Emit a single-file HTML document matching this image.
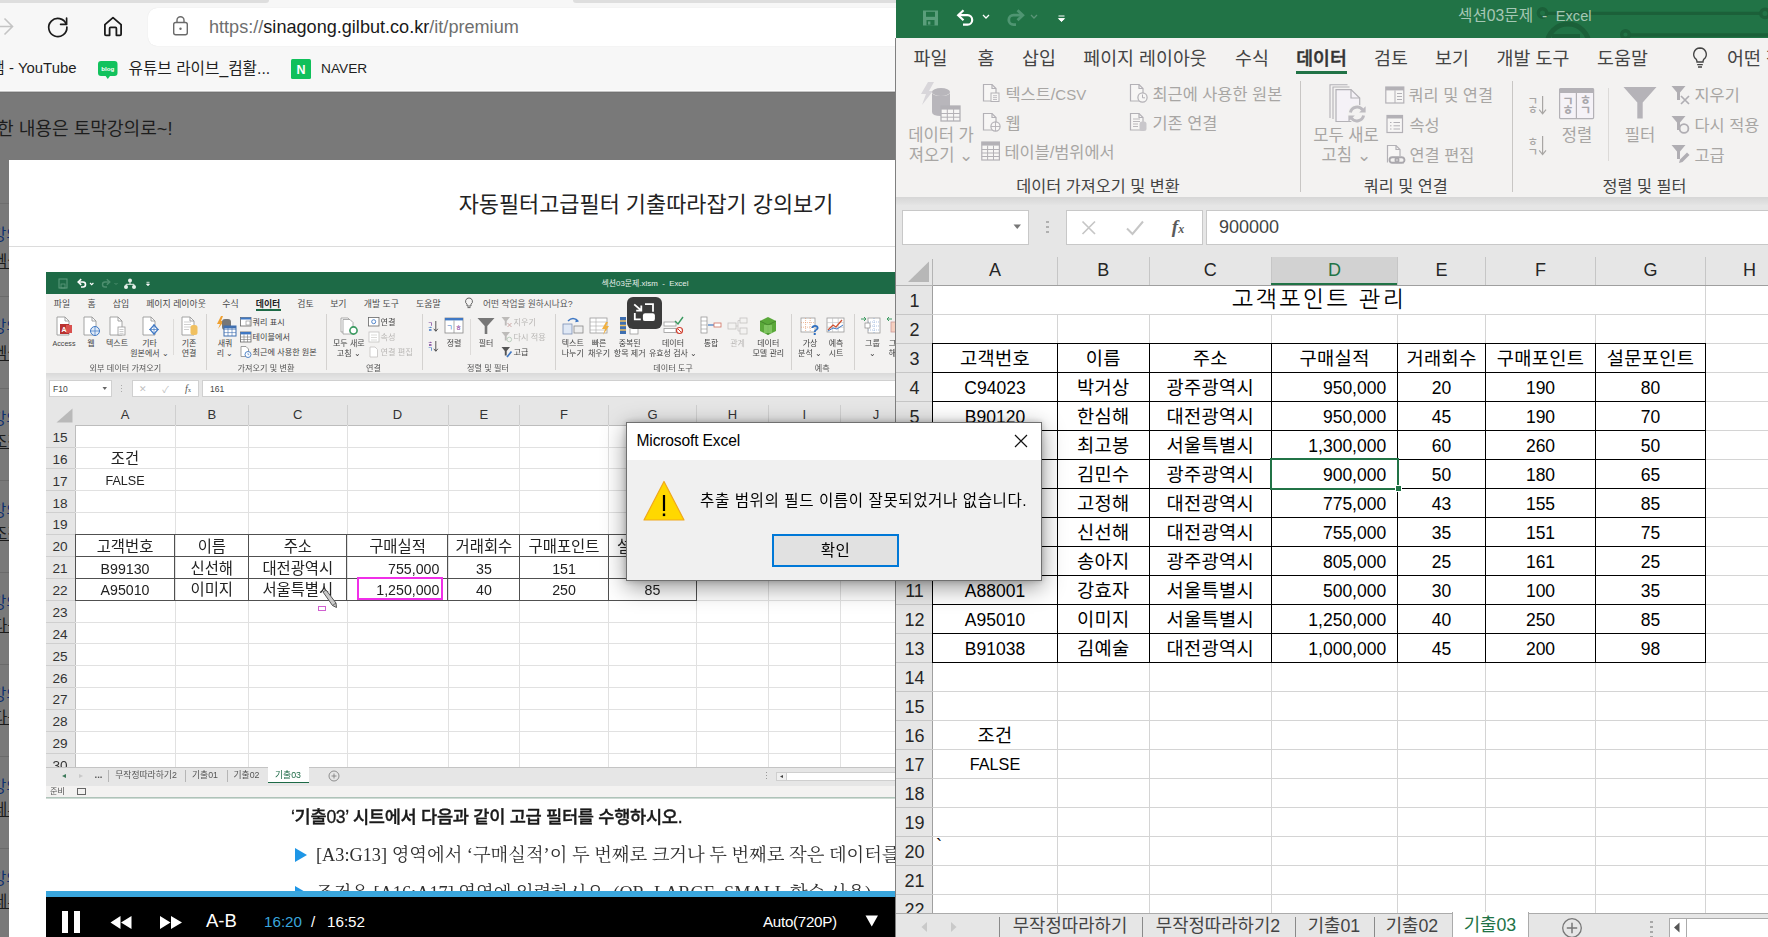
<!DOCTYPE html>
<html lang="ko"><head><meta charset="utf-8"><title>섹션03문제 - Excel</title>
<style>
html,body{margin:0;padding:0;}
body{width:1768px;height:937px;overflow:hidden;position:relative;background:#fff;font-family:'Liberation Sans','Noto Sans CJK KR',sans-serif;}
div{box-sizing:border-box;}
#browser{position:absolute;left:0;top:0;width:896px;height:937px;overflow:hidden;background:#fff;}
#excel{position:absolute;left:896px;top:0;width:872px;height:937px;overflow:hidden;background:#fff;}
#video{position:absolute;left:46px;top:272px;width:860px;height:665px;overflow:hidden;background:#fff;}
#vin{position:absolute;left:-46px;top:-272px;width:960px;height:937px;filter:blur(0.45px);}
.serif{font-family:'Liberation Serif','Noto Serif CJK KR','Noto Serif CJK SC',serif;}
svg{position:absolute;overflow:visible;}
</style></head><body>

<div id="browser">
<div style="position:absolute;left:0.0px;top:0.0px;width:896.0px;height:3.0px;background:#f7f7f7;"></div>
<div style="position:absolute;left:0.0px;top:0.0px;width:269.0px;height:2.5px;background:#dedede;border-radius:0 0 7px 0;"></div>
<div style="position:absolute;left:573.0px;top:0.0px;width:323.0px;height:2.5px;background:#dedede;border-radius:0 0 0 7px;"></div>
<div style="position:absolute;left:0.0px;top:3.0px;width:896.0px;height:89.0px;background:#f7f7f7;"></div>
<div style="position:absolute;left:0.0px;top:90.0px;width:896.0px;height:1.0px;background:#fcfcfc;"></div>
<div style="position:absolute;left:0.0px;top:91.0px;width:896.0px;height:1.0px;background:#c4c4c4;"></div>
<div style="position:absolute;left:148.0px;top:8.0px;width:760.0px;height:37.5px;background:#fff;border-radius:9px;box-shadow:0 0 1px rgba(0,0,0,.12);"></div>
<svg style="left:-6px;top:16px" width="22" height="22" viewBox="0 0 22 22"><path d="M0 10.5H18M10.5 2.5L18.5 10.5L10.5 18.5" fill="none" stroke="#c4c4c4" stroke-width="1.6"/></svg>
<svg style="left:46px;top:15px" width="24" height="24" viewBox="0 0 24 24"><path d="M20.3 9.2A9.1 9.1 0 1 0 20.9 12" fill="none" stroke="#1b1b1b" stroke-width="1.7" stroke-linecap="round"/><path d="M20.6 3.2V9.3H14.6" fill="none" stroke="#1b1b1b" stroke-width="1.7" stroke-linecap="round" stroke-linejoin="round"/></svg>
<svg style="left:101px;top:15px" width="24" height="24" viewBox="0 0 24 24"><path d="M12 2.6L3.9 9.6V19.2Q3.9 20.3 5 20.3H8.6V13.4Q8.6 12.4 9.6 12.4H14.4Q15.4 12.4 15.4 13.4V20.3H19Q20.1 20.3 20.1 19.2V9.6Z" fill="none" stroke="#1b1b1b" stroke-width="1.8" stroke-linejoin="round"/></svg>
<svg style="left:171px;top:15px" width="20" height="22" viewBox="0 0 20 22"><rect x="2.7" y="7.5" width="13.6" height="12.3" rx="2" fill="none" stroke="#6a6a6a" stroke-width="1.4"/><path d="M6 7.5V5.2A3.5 3.5 0 0 1 13 5.2V7.5" fill="none" stroke="#6a6a6a" stroke-width="1.4"/><circle cx="9.5" cy="13.7" r="1.2" fill="#6a6a6a"/></svg>
<div style="position:absolute;left:209.0px;top:14.5px;font-size:18.1px;line-height:25px;color:#1a1a1a;white-space:nowrap;"><span style="color:#6e6e6e">https://</span><span style="color:#1a1a1a">sinagong.gilbut.co.kr</span><span style="color:#6e6e6e">/it/premium</span></div>
<div style="position:absolute;left:76.5px;top:58.0px;font-size:14.9px;line-height:21px;color:#1f1f1f;white-space:nowrap;transform:translateX(-100%);">캠 - YouTube</div>
<svg style="left:97px;top:60px" width="22" height="20" viewBox="0 0 22 20"><path d="M4 1H17.5Q20.5 1 20.5 4V13Q20.5 16 17.5 16H13L10.8 19L8.6 16H4Q1 16 1 13V4Q1 1 4 1Z" fill="#12c25d"/><text x="10.8" y="11" font-size="6.2" font-weight="700" fill="#fff" text-anchor="middle" font-family="Liberation Sans,sans-serif">blog</text></svg>
<div style="position:absolute;left:128.5px;top:57.5px;font-size:15.7px;line-height:22px;color:#1f1f1f;white-space:nowrap;">유튜브 라이브_컴활...</div>
<svg style="left:291px;top:59px" width="20" height="20" viewBox="0 0 20 20"><rect width="20" height="20" rx="1.5" fill="#10c05b"/><text x="10" y="14.6" font-size="12.5" font-weight="700" fill="#fff" text-anchor="middle" font-family="Liberation Sans,sans-serif">N</text></svg>
<div style="position:absolute;left:321.0px;top:59.0px;font-size:13.7px;line-height:19px;color:#1f1f1f;white-space:nowrap;">NAVER</div>
<div style="position:absolute;left:0.0px;top:92.0px;width:896.0px;height:845.0px;background:#797979;"></div>
<div style="position:absolute;left:0.0px;top:92.0px;width:896.0px;height:1.0px;background:#727272;"></div>
<div style="position:absolute;left:-3.0px;top:117.0px;font-size:18.1px;line-height:25px;color:#1d1d1d;white-space:nowrap;">한 내용은 토막강의로~!</div>
<div style="position:absolute;left:0.0px;top:203.0px;width:9.0px;height:1.0px;background:#6e6e6e;"></div>
<div style="position:absolute;left:0.0px;top:296.0px;width:9.0px;height:1.0px;background:#6a6a6a;"></div>
<div style="position:absolute;left:0.0px;top:388.0px;width:9.0px;height:1.0px;background:#6a6a6a;"></div>
<div style="position:absolute;left:0.0px;top:480.0px;width:9.0px;height:1.0px;background:#6a6a6a;"></div>
<div style="position:absolute;left:0.0px;top:572.0px;width:9.0px;height:1.0px;background:#6a6a6a;"></div>
<div style="position:absolute;left:0.0px;top:664.0px;width:9.0px;height:1.0px;background:#6a6a6a;"></div>
<div style="position:absolute;left:0.0px;top:756.0px;width:9.0px;height:1.0px;background:#6a6a6a;"></div>
<div style="position:absolute;left:0.0px;top:848.0px;width:9.0px;height:1.0px;background:#6a6a6a;"></div>
<div style="position:absolute;left:-8.0px;top:224.0px;font-size:15.5px;line-height:22px;color:#0d2f6e;white-space:nowrap;">강의</div>
<div style="position:absolute;left:-7.0px;top:251.0px;font-size:15.5px;line-height:22px;color:#1a1a1a;white-space:nowrap;text-decoration:underline;">엑셀</div>
<div style="position:absolute;left:-8.0px;top:316.0px;font-size:15.5px;line-height:22px;color:#0d2f6e;white-space:nowrap;">강의</div>
<div style="position:absolute;left:-7.0px;top:343.0px;font-size:15.5px;line-height:22px;color:#1a1a1a;white-space:nowrap;text-decoration:underline;">엑셀</div>
<div style="position:absolute;left:-8.0px;top:408.0px;font-size:15.5px;line-height:22px;color:#0d2f6e;white-space:nowrap;">강의</div>
<div style="position:absolute;left:-7.0px;top:431.0px;font-size:15.5px;line-height:22px;color:#1a1a1a;white-space:nowrap;text-decoration:underline;">조건</div>
<div style="position:absolute;left:-8.0px;top:500.0px;font-size:15.5px;line-height:22px;color:#0d2f6e;white-space:nowrap;">강의</div>
<div style="position:absolute;left:-7.0px;top:523.0px;font-size:15.5px;line-height:22px;color:#1a1a1a;white-space:nowrap;text-decoration:underline;">조건</div>
<div style="position:absolute;left:-8.0px;top:592.0px;font-size:15.5px;line-height:22px;color:#0d2f6e;white-space:nowrap;">강의</div>
<div style="position:absolute;left:-7.0px;top:615.0px;font-size:15.5px;line-height:22px;color:#1a1a1a;white-space:nowrap;text-decoration:underline;">다음</div>
<div style="position:absolute;left:-8.0px;top:684.0px;font-size:15.5px;line-height:22px;color:#0d2f6e;white-space:nowrap;">강의</div>
<div style="position:absolute;left:-7.0px;top:707.0px;font-size:15.5px;line-height:22px;color:#1a1a1a;white-space:nowrap;text-decoration:underline;">다음</div>
<div style="position:absolute;left:-8.0px;top:776.0px;font-size:15.5px;line-height:22px;color:#0d2f6e;white-space:nowrap;">강의</div>
<div style="position:absolute;left:-7.0px;top:799.0px;font-size:15.5px;line-height:22px;color:#1a1a1a;white-space:nowrap;text-decoration:underline;">세부</div>
<div style="position:absolute;left:-8.0px;top:868.0px;font-size:15.5px;line-height:22px;color:#0d2f6e;white-space:nowrap;">강의</div>
<div style="position:absolute;left:-7.0px;top:891.0px;font-size:15.5px;line-height:22px;color:#1a1a1a;white-space:nowrap;text-decoration:underline;">세부</div>
<div style="position:absolute;left:9.0px;top:160.0px;width:890.0px;height:780.0px;background:#fff;"></div>
<div style="position:absolute;left:646.0px;top:189.0px;font-size:21.9px;line-height:31px;color:#222;white-space:nowrap;transform:translateX(-50%);">자동필터고급필터 기출따라잡기 강의보기</div>
<div style="position:absolute;left:9.0px;top:246.0px;width:890.0px;height:1.0px;background:#dcdcdc;"></div>
<div id="video"><div id="vin">
<div style="position:absolute;left:46.0px;top:272.0px;width:860.0px;height:22.0px;background:#1d6a46;"></div>
<svg style="left:58px;top:278px" width="100" height="12" viewBox="0 0 100 12"><rect x="1" y="1" width="8" height="9" fill="none" stroke="#5f9b7e" stroke-width="1"/><rect x="3" y="6" width="4" height="4" fill="none" stroke="#5f9b7e" stroke-width="0.8"/><path d="M21 4H25A2.5 2.5 0 0 1 25 9H23" fill="none" stroke="#fff" stroke-width="1.6"/><path d="M23.2 1.2L20.2 4L23.2 6.8" fill="none" stroke="#fff" stroke-width="1.6"/><path d="M32 5L33.7 6.7L35.4 5" fill="none" stroke="#fff" stroke-width="1.1"/><path d="M51 4H47A2.5 2.5 0 0 0 47 9H49" fill="none" stroke="#4d8f6f" stroke-width="1.4"/><path d="M48.8 1.2L51.8 4L48.8 6.8" fill="none" stroke="#4d8f6f" stroke-width="1.4"/><path d="M56.5 5L58 6.5L59.5 5" fill="none" stroke="#4d8f6f" stroke-width="1"/><circle cx="72" cy="2.6" r="2" fill="#e8f1ec"/><circle cx="68" cy="9" r="2" fill="#e8f1ec"/><circle cx="76" cy="9" r="2" fill="#e8f1ec"/><path d="M72 4V6.3M68 8V6.3H76V8" stroke="#e8f1ec" fill="none" stroke-width="1"/><path d="M88.5 4.3H91.5M88.5 6L90 7.8L91.5 6Z" stroke="#fff" fill="#fff" stroke-width="0.8"/></svg>
<div style="position:absolute;left:645.0px;top:277.5px;font-size:7.9px;line-height:11px;color:#e6efe9;white-space:nowrap;transform:translateX(-50%);">섹션03문제.xlsm&nbsp; - &nbsp;Excel</div>
<div style="position:absolute;left:46.0px;top:294.0px;width:860.0px;height:79.0px;background:#f3f2f1;"></div>
<div style="position:absolute;left:62.0px;top:297.8px;font-size:8.9px;line-height:12px;color:#4a4a4a;white-space:nowrap;transform:translateX(-50%);">파일</div>
<div style="position:absolute;left:91.5px;top:297.8px;font-size:8.9px;line-height:12px;color:#4a4a4a;white-space:nowrap;transform:translateX(-50%);">홈</div>
<div style="position:absolute;left:121.0px;top:297.8px;font-size:8.9px;line-height:12px;color:#4a4a4a;white-space:nowrap;transform:translateX(-50%);">삽입</div>
<div style="position:absolute;left:176.0px;top:297.8px;font-size:8.9px;line-height:12px;color:#4a4a4a;white-space:nowrap;transform:translateX(-50%);">페이지 레이아웃</div>
<div style="position:absolute;left:230.5px;top:297.8px;font-size:8.9px;line-height:12px;color:#4a4a4a;white-space:nowrap;transform:translateX(-50%);">수식</div>
<div style="position:absolute;left:305.5px;top:297.8px;font-size:8.9px;line-height:12px;color:#4a4a4a;white-space:nowrap;transform:translateX(-50%);">검토</div>
<div style="position:absolute;left:338.3px;top:297.8px;font-size:8.9px;line-height:12px;color:#4a4a4a;white-space:nowrap;transform:translateX(-50%);">보기</div>
<div style="position:absolute;left:381.4px;top:297.8px;font-size:8.9px;line-height:12px;color:#4a4a4a;white-space:nowrap;transform:translateX(-50%);">개발 도구</div>
<div style="position:absolute;left:428.3px;top:297.8px;font-size:8.9px;line-height:12px;color:#4a4a4a;white-space:nowrap;transform:translateX(-50%);">도움말</div>
<div style="position:absolute;left:268.0px;top:297.8px;font-size:8.9px;line-height:12px;color:#1f1f1f;white-space:nowrap;transform:translateX(-50%);font-weight:700;">데이터</div>
<div style="position:absolute;left:255.5px;top:309.3px;width:25.5px;height:1.8px;background:#1d6a46;"></div>
<svg style="left:464px;top:297px" width="10" height="13" viewBox="0 0 10 13"><path d="M5 1A3.4 3.4 0 0 0 3 7.2V9H7V7.2A3.4 3.4 0 0 0 5 1ZM3.5 10.6H6.5" fill="none" stroke="#555" stroke-width="0.9"/></svg>
<div style="position:absolute;left:483.0px;top:297.5px;font-size:8.7px;line-height:12px;color:#555;white-space:nowrap;">어떤 작업을 원하시나요?</div>
<svg style="left:52.0px;top:316px" width="24" height="22" viewBox="0 0 24 22"><path d="M5 1H13L17 5V19H5Z" fill="#fff" stroke="#9a9a9a" stroke-width="0.9"/><path d="M13 1V5H17" fill="none" stroke="#9a9a9a" stroke-width="0.9"/><rect x="8" y="8" width="9" height="10" fill="#b8312f"/><rect x="14" y="9" width="6" height="8" fill="#d9504e"/><text x="12" y="16" font-size="7" font-weight="700" fill="#fff" text-anchor="middle" font-family="Liberation Sans,sans-serif">A</text></svg><div style="position:absolute;left:64.0px;top:337.5px;font-size:8.0px;line-height:11px;color:#444;white-space:nowrap;transform:translateX(-50%);"><span style="font-size:7.1px">Access</span></div>
<svg style="left:79.0px;top:316px" width="24" height="22" viewBox="0 0 24 22"><path d="M5 1H13L17 5V19H5Z" fill="#fff" stroke="#9a9a9a" stroke-width="0.9"/><path d="M13 1V5H17" fill="none" stroke="#9a9a9a" stroke-width="0.9"/><circle cx="16" cy="15" r="4.5" fill="#dfeaf7" stroke="#3f78c4" stroke-width="1"/><path d="M11.5 15H20.5M16 10.5V19.5" stroke="#3f78c4" stroke-width="0.7"/></svg><div style="position:absolute;left:91.0px;top:337.5px;font-size:8.0px;line-height:11px;color:#444;white-space:nowrap;transform:translateX(-50%);">웹</div>
<svg style="left:105.0px;top:316px" width="24" height="22" viewBox="0 0 24 22"><path d="M5 1H13L17 5V19H5Z" fill="#fff" stroke="#9a9a9a" stroke-width="0.9"/><path d="M13 1V5H17" fill="none" stroke="#9a9a9a" stroke-width="0.9"/><rect x="13" y="11" width="7" height="8" fill="#fff" stroke="#9a9a9a" stroke-width="0.8"/><path d="M14.5 13.5H18.5M14.5 15.5H18.5M14.5 17.3H18.5" stroke="#aaa" stroke-width="0.6"/></svg><div style="position:absolute;left:117.0px;top:337.5px;font-size:8.0px;line-height:11px;color:#444;white-space:nowrap;transform:translateX(-50%);">텍스트</div>
<svg style="left:137.5px;top:316px" width="24" height="22" viewBox="0 0 24 22"><path d="M5 1H13L17 5V19H5Z" fill="#fff" stroke="#9a9a9a" stroke-width="0.9"/><path d="M13 1V5H17" fill="none" stroke="#9a9a9a" stroke-width="0.9"/><path d="M16 9L20 13.5L16 18L12 13.5Z" fill="#fff" stroke="#3f78c4" stroke-width="1.2"/><path d="M16 8V19M11 13.5H21" stroke="#3f78c4" stroke-width="0.7"/></svg><div style="position:absolute;left:149.5px;top:337.5px;font-size:8.0px;line-height:11px;color:#444;white-space:nowrap;transform:translateX(-50%);">기타</div><div style="position:absolute;left:149.5px;top:348.0px;font-size:8.0px;line-height:11px;color:#444;white-space:nowrap;transform:translateX(-50%);">원본에서 ⌄</div>
<div style="position:absolute;left:172.6px;top:319.0px;width:0.8px;height:36.0px;background:#dddbd9;"></div>
<svg style="left:177.0px;top:316px" width="24" height="22" viewBox="0 0 24 22"><path d="M5 1H13L17 5V19H5Z" fill="#fff" stroke="#9a9a9a" stroke-width="0.9"/><path d="M13 1V5H17" fill="none" stroke="#9a9a9a" stroke-width="0.9"/><path d="M7 6H14M7 8.5H14M7 11H14M7 13.5H12" stroke="#bbb" stroke-width="0.7"/><rect x="13.5" y="9" width="7" height="10" rx="2.5" fill="#f0c060"/></svg><div style="position:absolute;left:189.0px;top:337.5px;font-size:8.0px;line-height:11px;color:#444;white-space:nowrap;transform:translateX(-50%);">기존</div><div style="position:absolute;left:189.0px;top:348.0px;font-size:8.0px;line-height:11px;color:#444;white-space:nowrap;transform:translateX(-50%);">연결</div>
<div style="position:absolute;left:206.0px;top:314.0px;width:1.0px;height:56.0px;background:#d4d2d0;"></div>
<svg style="left:213.0px;top:316px" width="24" height="22" viewBox="0 0 24 22"><path d="M8 0L4 8H7L5 13L11 5H8L10 0Z" fill="#f0a030"/><rect x="9" y="3" width="9" height="11" rx="3" fill="#777"/><rect x="11" y="10" width="12" height="10" fill="#fff" stroke="#3f6fb0" stroke-width="1"/><path d="M11 13.3H23M11 16.6H23M15 10V20M19 10V20" stroke="#3f6fb0" stroke-width="0.6"/><rect x="11" y="10" width="12" height="2.4" fill="#3f6fb0"/></svg><div style="position:absolute;left:225.0px;top:337.5px;font-size:8.0px;line-height:11px;color:#444;white-space:nowrap;transform:translateX(-50%);">새쿼</div><div style="position:absolute;left:225.0px;top:348.0px;font-size:8.0px;line-height:11px;color:#444;white-space:nowrap;transform:translateX(-50%);">리 ⌄</div>
<svg style="left:240.0px;top:316.0px" width="12" height="12" viewBox="0 0 12 12"><rect x="0.5" y="1.5" width="10.5" height="8.5" fill="#fff" stroke="#666" stroke-width="0.8"/><rect x="0.5" y="1.5" width="10.5" height="2" fill="#3f78c4"/><rect x="6" y="5" width="4" height="4" fill="none" stroke="#888" stroke-width="0.6"/></svg><div style="position:absolute;left:252.5px;top:316.8px;font-size:8.15px;line-height:11px;color:#444;white-space:nowrap;">쿼리 표시</div>
<svg style="left:240.0px;top:331.0px" width="12" height="12" viewBox="0 0 12 12"><rect x="0.5" y="1" width="10.5" height="10" fill="#fff" stroke="#666" stroke-width="0.8"/><rect x="0.5" y="1" width="10.5" height="2.4" fill="#3f78c4"/><path d="M0.5 6H11M0.5 8.5H11M4 3.4V11M7.5 3.4V11" stroke="#777" stroke-width="0.6"/></svg><div style="position:absolute;left:252.5px;top:331.8px;font-size:8.15px;line-height:11px;color:#444;white-space:nowrap;">테이블에서</div>
<svg style="left:240.0px;top:346.0px" width="12" height="12" viewBox="0 0 12 12"><path d="M1 0.5H6L8.5 3V10.5H1Z" fill="#fff" stroke="#888" stroke-width="0.8"/><circle cx="8" cy="8.5" r="3" fill="#fff" stroke="#3f78c4" stroke-width="0.9"/><path d="M8 7V8.7H9.3" stroke="#3f78c4" stroke-width="0.6" fill="none"/></svg><div style="position:absolute;left:252.5px;top:346.8px;font-size:8.15px;line-height:11px;color:#444;white-space:nowrap;">최근에 사용한 원본</div>
<div style="position:absolute;left:125.4px;top:363.2px;font-size:8.15px;line-height:11px;color:#555;white-space:nowrap;transform:translateX(-50%);">외부 데이터 가져오기</div>
<div style="position:absolute;left:266.0px;top:363.2px;font-size:8.15px;line-height:11px;color:#555;white-space:nowrap;transform:translateX(-50%);">가져오기 및 변환</div>
<div style="position:absolute;left:326.0px;top:314.0px;width:1.0px;height:56.0px;background:#d4d2d0;"></div>
<svg style="left:336.8px;top:316px" width="24" height="22" viewBox="0 0 24 22"><path d="M4 2H11L14 5V16H4Z" fill="#fff" stroke="#999" stroke-width="0.8"/><path d="M6 3.5H13L16 6.5V18H6Z" fill="#fff" stroke="#999" stroke-width="0.8"/><circle cx="16.5" cy="14.5" r="3.6" fill="#fff" stroke="#3a9a60" stroke-width="1.6"/></svg><div style="position:absolute;left:348.8px;top:337.5px;font-size:8.0px;line-height:11px;color:#444;white-space:nowrap;transform:translateX(-50%);">모두 새로</div><div style="position:absolute;left:348.8px;top:348.0px;font-size:8.0px;line-height:11px;color:#444;white-space:nowrap;transform:translateX(-50%);">고침 ⌄</div>
<svg style="left:368.0px;top:316.0px" width="12" height="12" viewBox="0 0 12 12"><rect x="0.5" y="1.5" width="10.5" height="8.5" fill="#fff" stroke="#666" stroke-width="0.8"/><circle cx="5.7" cy="5.7" r="2" fill="none" stroke="#3f78c4" stroke-width="0.9"/></svg><div style="position:absolute;left:380.5px;top:316.8px;font-size:8.15px;line-height:11px;color:#444;white-space:nowrap;">연결</div>
<svg style="left:368.0px;top:331.0px" width="12" height="12" viewBox="0 0 12 12"><rect x="1" y="1" width="10" height="10" fill="#fff" stroke="#c4c2c0" stroke-width="0.8"/><path d="M3 4H9M3 6.5H9M3 9H9" stroke="#c4c2c0" stroke-width="0.6"/></svg><div style="position:absolute;left:380.5px;top:331.8px;font-size:8.15px;line-height:11px;color:#b8b6b4;white-space:nowrap;">속성</div>
<svg style="left:368.0px;top:346.0px" width="12" height="12" viewBox="0 0 12 12"><path d="M2 1H7L9.5 3.5V11H2Z" fill="#fff" stroke="#c4c2c0" stroke-width="0.8"/></svg><div style="position:absolute;left:380.5px;top:346.8px;font-size:8.15px;line-height:11px;color:#b8b6b4;white-space:nowrap;">연결 편집</div>
<div style="position:absolute;left:373.5px;top:363.2px;font-size:8.15px;line-height:11px;color:#555;white-space:nowrap;transform:translateX(-50%);">연결</div>
<div style="position:absolute;left:421.5px;top:314.0px;width:1.0px;height:56.0px;background:#d4d2d0;"></div>
<svg style="left:427px;top:320px" width="12" height="13" viewBox="0 0 12 13"><text x="3.3" y="5.5" font-size="5.5" fill="#7a3f9a" text-anchor="middle" font-weight="700">ㄱ</text><text x="3.3" y="11" font-size="5.5" fill="#3f78c4" text-anchor="middle" font-weight="700">ㅎ</text><path d="M8.8 1V11M6.8 8.8L8.8 11.3L10.8 8.8" fill="none" stroke="#444" stroke-width="0.9"/></svg>
<svg style="left:427px;top:340px" width="12" height="13" viewBox="0 0 12 13"><text x="3.3" y="5.5" font-size="5.5" fill="#7a3f9a" text-anchor="middle" font-weight="700">ㅎ</text><text x="3.3" y="11" font-size="5.5" fill="#3f78c4" text-anchor="middle" font-weight="700">ㄱ</text><path d="M8.8 1V11M6.8 8.8L8.8 11.3L10.8 8.8" fill="none" stroke="#444" stroke-width="0.9"/></svg>
<svg style="left:442.0px;top:316px" width="24" height="22" viewBox="0 0 24 22"><rect x="3" y="2" width="18" height="15" fill="#fff" stroke="#888" stroke-width="0.8"/><rect x="3" y="2" width="18" height="2.4" fill="#3f78c4"/><path d="M12 4.4V17" stroke="#888" stroke-width="0.7"/><text x="7.5" y="14" font-size="7" fill="#3f78c4" text-anchor="middle">ㄱ</text><text x="16.5" y="14" font-size="7" fill="#8a3fa0" text-anchor="middle">ㅎ</text></svg><div style="position:absolute;left:454.0px;top:337.5px;font-size:8.0px;line-height:11px;color:#444;white-space:nowrap;transform:translateX(-50%);">정렬</div>
<div style="position:absolute;left:470.0px;top:319.0px;width:0.8px;height:36.0px;background:#dddbd9;"></div>
<svg style="left:474.0px;top:316px" width="24" height="22" viewBox="0 0 24 22"><path d="M3.5 2H20.5L13.3 10V18H10.7V10Z" fill="#777"/></svg><div style="position:absolute;left:486.0px;top:337.5px;font-size:8.0px;line-height:11px;color:#444;white-space:nowrap;transform:translateX(-50%);">필터</div>
<svg style="left:501.0px;top:316.0px" width="12" height="12" viewBox="0 0 12 12"><path d="M0.5 1H9L5.7 5V9.5H3.8V5Z" fill="#bdbbb9"/><path d="M6.5 7L10.5 11M10.5 7L6.5 11" stroke="#c8a0a0" stroke-width="0.9"/></svg><div style="position:absolute;left:513.5px;top:316.8px;font-size:8.15px;line-height:11px;color:#b8b6b4;white-space:nowrap;">지우기</div>
<svg style="left:501.0px;top:331.0px" width="12" height="12" viewBox="0 0 12 12"><path d="M0.5 1H9L5.7 5V9.5H3.8V5Z" fill="#bdbbb9"/><circle cx="8.3" cy="8.5" r="2.3" fill="none" stroke="#b5c9b8" stroke-width="0.9"/></svg><div style="position:absolute;left:513.5px;top:331.8px;font-size:8.15px;line-height:11px;color:#b8b6b4;white-space:nowrap;">다시 적용</div>
<svg style="left:501.0px;top:346.0px" width="12" height="12" viewBox="0 0 12 12"><path d="M0.5 1H9L5.7 5V9.5H3.8V5Z" fill="#555"/><path d="M6 11L10.5 5.5" stroke="#3f78c4" stroke-width="1.7"/></svg><div style="position:absolute;left:513.5px;top:346.8px;font-size:8.15px;line-height:11px;color:#444;white-space:nowrap;">고급</div>
<div style="position:absolute;left:488.0px;top:363.2px;font-size:8.15px;line-height:11px;color:#555;white-space:nowrap;transform:translateX(-50%);">정렬 및 필터</div>
<div style="position:absolute;left:554.5px;top:314.0px;width:1.0px;height:56.0px;background:#d4d2d0;"></div>
<svg style="left:560.8px;top:316px" width="24" height="22" viewBox="0 0 24 22"><rect x="2" y="8" width="9" height="10" fill="#dfe8f5" stroke="#7a8fb3" stroke-width="0.8"/><rect x="13" y="10" width="9" height="7" fill="#eee" stroke="#888" stroke-width="0.8"/><path d="M7 5Q12 0 17 5" fill="none" stroke="#3f78c4" stroke-width="1.5"/><path d="M15 2.5L18 5.5L14.3 6.3Z" fill="#3f78c4"/></svg><div style="position:absolute;left:572.8px;top:337.5px;font-size:8.0px;line-height:11px;color:#444;white-space:nowrap;transform:translateX(-50%);">텍스트</div><div style="position:absolute;left:572.8px;top:348.0px;font-size:8.0px;line-height:11px;color:#444;white-space:nowrap;transform:translateX(-50%);">나누기</div>
<svg style="left:587.0px;top:316px" width="24" height="22" viewBox="0 0 24 22"><rect x="3" y="2" width="17" height="15" fill="#fff" stroke="#999" stroke-width="0.8"/><path d="M3 6H20M3 10H20M3 14H20M9 2V17" stroke="#aaa" stroke-width="0.6"/><path d="M19 6L15 13H18L16 19L22 10H19L21 6Z" fill="#f0b040"/></svg><div style="position:absolute;left:599.0px;top:337.5px;font-size:8.0px;line-height:11px;color:#444;white-space:nowrap;transform:translateX(-50%);">빠른</div><div style="position:absolute;left:599.0px;top:348.0px;font-size:8.0px;line-height:11px;color:#444;white-space:nowrap;transform:translateX(-50%);">채우기</div>
<svg style="left:617.7px;top:316px" width="24" height="22" viewBox="0 0 24 22"><rect x="2" y="1" width="6" height="17" fill="#3f6fb0"/><path d="M2 5H8M2 9.5H8M2 14H8" stroke="#f0c060" stroke-width="1.6"/><rect x="12" y="10" width="8" height="8" fill="#fff" stroke="#999" stroke-width="0.8"/></svg><div style="position:absolute;left:629.7px;top:337.5px;font-size:8.0px;line-height:11px;color:#444;white-space:nowrap;transform:translateX(-50%);">중복된</div><div style="position:absolute;left:629.7px;top:348.0px;font-size:8.0px;line-height:11px;color:#444;white-space:nowrap;transform:translateX(-50%);">항목 제거</div>
<svg style="left:661.0px;top:316px" width="24" height="22" viewBox="0 0 24 22"><rect x="3" y="6" width="12" height="4" fill="#fff" stroke="#999" stroke-width="0.8"/><rect x="3" y="12.5" width="12" height="4" fill="#fff" stroke="#999" stroke-width="0.8"/><path d="M14 5L17 8L22 1" fill="none" stroke="#3a9a60" stroke-width="1.4"/><circle cx="18.5" cy="14.5" r="3" fill="#fff" stroke="#d04030" stroke-width="1.2"/><path d="M16.5 12.5L20.5 16.5" stroke="#d04030" stroke-width="1"/></svg><div style="position:absolute;left:673.0px;top:337.5px;font-size:8.0px;line-height:11px;color:#444;white-space:nowrap;transform:translateX(-50%);">데이터</div><div style="position:absolute;left:673.0px;top:348.0px;font-size:8.0px;line-height:11px;color:#444;white-space:nowrap;transform:translateX(-50%);">유효성 검사 ⌄</div>
<svg style="left:699.0px;top:316px" width="24" height="22" viewBox="0 0 24 22"><rect x="2" y="1" width="6" height="16" fill="#fff" stroke="#999" stroke-width="0.8"/><path d="M2 5H8M2 9H8M2 13H8" stroke="#999" stroke-width="0.6"/><path d="M9 9H15" stroke="#3f78c4" stroke-width="1.2"/><rect x="15" y="7" width="7" height="4" fill="#fff" stroke="#d07060" stroke-width="0.8"/></svg><div style="position:absolute;left:711.0px;top:337.5px;font-size:8.0px;line-height:11px;color:#444;white-space:nowrap;transform:translateX(-50%);">통합</div>
<svg style="left:725.5px;top:316px" width="24" height="22" viewBox="0 0 24 22"><rect x="2" y="7" width="8" height="6" fill="#f3f2f1" stroke="#c4c2c0" stroke-width="0.8"/><rect x="14" y="2" width="7" height="5" fill="#f3f2f1" stroke="#c4c2c0" stroke-width="0.8"/><rect x="14" y="12" width="7" height="6" fill="#f3f2f1" stroke="#c4c2c0" stroke-width="0.8"/><path d="M10 10H12V4.5H14M12 10V15H14" fill="none" stroke="#c4c2c0" stroke-width="0.7"/></svg><div style="position:absolute;left:737.5px;top:337.5px;font-size:8.0px;line-height:11px;color:#bdbbb9;white-space:nowrap;transform:translateX(-50%);">관계</div>
<svg style="left:756.3px;top:316px" width="24" height="22" viewBox="0 0 24 22"><path d="M4 5L12 1L20 5V15L12 19L4 15Z" fill="#5aa83a"/><path d="M4 5L12 9L20 5M12 9V19" stroke="#3d7d28" stroke-width="0.8" fill="none"/><rect x="8" y="9" width="8" height="8" fill="#8fd070" opacity=".7"/></svg><div style="position:absolute;left:768.3px;top:337.5px;font-size:8.0px;line-height:11px;color:#444;white-space:nowrap;transform:translateX(-50%);">데이터</div><div style="position:absolute;left:768.3px;top:348.0px;font-size:8.0px;line-height:11px;color:#444;white-space:nowrap;transform:translateX(-50%);">모델 관리</div>
<div style="position:absolute;left:673.0px;top:363.2px;font-size:8.15px;line-height:11px;color:#555;white-space:nowrap;transform:translateX(-50%);">데이터 도구</div>
<div style="position:absolute;left:791.2px;top:314.0px;width:1.0px;height:56.0px;background:#d4d2d0;"></div>
<svg style="left:798.0px;top:316px" width="24" height="22" viewBox="0 0 24 22"><rect x="3" y="2" width="14" height="14" fill="#fff" stroke="#999" stroke-width="0.8"/><path d="M3 6.6H17M3 11.2H17M7.6 2V16M12.2 2V16" stroke="#e09060" stroke-width="0.6" stroke-dasharray="1 1"/><text x="17" y="19" font-size="14" font-weight="700" fill="#2f6fc0" text-anchor="middle" font-family="Liberation Sans,sans-serif">?</text></svg><div style="position:absolute;left:810.0px;top:337.5px;font-size:8.0px;line-height:11px;color:#444;white-space:nowrap;transform:translateX(-50%);">가상</div><div style="position:absolute;left:810.0px;top:348.0px;font-size:8.0px;line-height:11px;color:#444;white-space:nowrap;transform:translateX(-50%);">분석 ⌄</div>
<svg style="left:824.0px;top:316px" width="24" height="22" viewBox="0 0 24 22"><rect x="3" y="2" width="17" height="14" fill="#fff" stroke="#999" stroke-width="0.8"/><path d="M3 6.6H20M3 11.2H20M8.6 2V16M14.2 2V16" stroke="#bbb" stroke-width="0.6"/><path d="M4 14L9 9L12 11L18 4" fill="none" stroke="#d05030" stroke-width="1.3"/><path d="M4 15L9 12L13 13L19 9" fill="none" stroke="#3f78c4" stroke-width="1"/></svg><div style="position:absolute;left:836.0px;top:337.5px;font-size:8.0px;line-height:11px;color:#444;white-space:nowrap;transform:translateX(-50%);">예측</div><div style="position:absolute;left:836.0px;top:348.0px;font-size:8.0px;line-height:11px;color:#444;white-space:nowrap;transform:translateX(-50%);">시트</div>
<div style="position:absolute;left:822.3px;top:363.2px;font-size:8.15px;line-height:11px;color:#555;white-space:nowrap;transform:translateX(-50%);">예측</div>
<div style="position:absolute;left:853.5px;top:314.0px;width:1.0px;height:56.0px;background:#d4d2d0;"></div>
<svg style="left:860.4px;top:316px" width="24" height="22" viewBox="0 0 24 22"><rect x="8" y="2" width="12" height="15" fill="#fff" stroke="#999" stroke-width="0.8"/><path d="M8 6H20M8 10H20M8 14H20M14 2V17" stroke="#7a9fd0" stroke-width="0.6" stroke-dasharray="1 1"/><path d="M1 3H6M4 1L6 3L4 5" fill="none" stroke="#3a9a60" stroke-width="1"/><rect x="5" y="7" width="5" height="5" fill="#fff" stroke="#888" stroke-width="0.7"/></svg><div style="position:absolute;left:872.4px;top:337.5px;font-size:8.0px;line-height:11px;color:#444;white-space:nowrap;transform:translateX(-50%);">그룹</div><div style="position:absolute;left:872.4px;top:348.0px;font-size:8.0px;line-height:11px;color:#444;white-space:nowrap;transform:translateX(-50%);">⌄</div>
<svg style="left:884.0px;top:316px" width="24" height="22" viewBox="0 0 24 22"><path d="M8 3H3M5 1L3 3L5 5" fill="none" stroke="#3a9a60" stroke-width="1"/><rect x="7" y="6" width="8" height="10" fill="#f5d0c0" stroke="#c99" stroke-width="0.8"/></svg><div style="position:absolute;left:896.0px;top:337.5px;font-size:8.0px;line-height:11px;color:#444;white-space:nowrap;transform:translateX(-50%);">그룹</div><div style="position:absolute;left:896.0px;top:348.0px;font-size:8.0px;line-height:11px;color:#444;white-space:nowrap;transform:translateX(-50%);">해제</div>
<div style="position:absolute;left:46.0px;top:373.0px;width:860.0px;height:8.0px;background:linear-gradient(#d9d9d9,#e9e9e9);"></div>
<div style="position:absolute;left:46.0px;top:380.0px;width:860.0px;height:24.0px;background:#e6e6e6;"></div>
<div style="position:absolute;left:48.8px;top:380.3px;width:63.5px;height:17.2px;background:#fff;border:1px solid #d0d0d0;"></div>
<div style="position:absolute;left:53.0px;top:383.3px;font-size:8.5px;line-height:12px;color:#444;white-space:nowrap;">F10</div>
<svg style="left:102px;top:386px" width="6" height="5" viewBox="0 0 6 5"><path d="M0.5 1H5L2.75 4Z" fill="#666"/></svg>
<div style="position:absolute;left:120.5px;top:385.0px;width:1.0px;height:8.0px;background:#bbb;background:repeating-linear-gradient(#aaa 0 1px,transparent 1px 3px);"></div>
<div style="position:absolute;left:131.5px;top:380.3px;width:67.5px;height:17.2px;background:#fff;border:1px solid #d0d0d0;"></div>
<div style="position:absolute;left:143.0px;top:383.0px;font-size:8.5px;line-height:12px;color:#c0c0c0;white-space:nowrap;transform:translateX(-50%);">✕</div>
<div style="position:absolute;left:165.5px;top:382.5px;font-size:9.5px;line-height:13px;color:#c0c0c0;white-space:nowrap;transform:translateX(-50%);">✓</div>
<div class="serif" style="position:absolute;left:188.0px;top:381.6px;font-size:10px;line-height:14px;color:#555;white-space:nowrap;transform:translateX(-50%);"><i>f</i><span style="font-size:6px">x</span></div>
<div style="position:absolute;left:202.0px;top:380.3px;width:710.0px;height:17.2px;background:#fff;border:1px solid #d0d0d0;"></div>
<div style="position:absolute;left:210.0px;top:383.3px;font-size:8.5px;line-height:12px;color:#444;white-space:nowrap;">161</div>
<div style="position:absolute;left:46.0px;top:403.5px;width:860.0px;height:21.7px;background:#e6e6e6;"></div>
<svg style="left:56px;top:408px" width="17" height="15" viewBox="0 0 17 15"><path d="M16.5 0.5V14.5H0.5Z" fill="#b9b9b9"/></svg>
<div style="position:absolute;left:125.0px;top:405.8px;font-size:13px;line-height:18px;color:#333;white-space:nowrap;transform:translateX(-50%);">A</div>
<div style="position:absolute;left:174.5px;top:405.0px;width:1.0px;height:20.0px;background:#cfcfcf;"></div>
<div style="position:absolute;left:211.8px;top:405.8px;font-size:13px;line-height:18px;color:#333;white-space:nowrap;transform:translateX(-50%);">B</div>
<div style="position:absolute;left:248.0px;top:405.0px;width:1.0px;height:20.0px;background:#cfcfcf;"></div>
<div style="position:absolute;left:297.8px;top:405.8px;font-size:13px;line-height:18px;color:#333;white-space:nowrap;transform:translateX(-50%);">C</div>
<div style="position:absolute;left:346.5px;top:405.0px;width:1.0px;height:20.0px;background:#cfcfcf;"></div>
<div style="position:absolute;left:397.5px;top:405.8px;font-size:13px;line-height:18px;color:#333;white-space:nowrap;transform:translateX(-50%);">D</div>
<div style="position:absolute;left:447.5px;top:405.0px;width:1.0px;height:20.0px;background:#cfcfcf;"></div>
<div style="position:absolute;left:483.9px;top:405.8px;font-size:13px;line-height:18px;color:#333;white-space:nowrap;transform:translateX(-50%);">E</div>
<div style="position:absolute;left:519.2px;top:405.0px;width:1.0px;height:20.0px;background:#cfcfcf;"></div>
<div style="position:absolute;left:564.0px;top:405.8px;font-size:13px;line-height:18px;color:#333;white-space:nowrap;transform:translateX(-50%);">F</div>
<div style="position:absolute;left:607.8px;top:405.0px;width:1.0px;height:20.0px;background:#cfcfcf;"></div>
<div style="position:absolute;left:652.5px;top:405.8px;font-size:13px;line-height:18px;color:#333;white-space:nowrap;transform:translateX(-50%);">G</div>
<div style="position:absolute;left:696.2px;top:405.0px;width:1.0px;height:20.0px;background:#cfcfcf;"></div>
<div style="position:absolute;left:732.5px;top:405.8px;font-size:13px;line-height:18px;color:#333;white-space:nowrap;transform:translateX(-50%);">H</div>
<div style="position:absolute;left:767.9px;top:405.0px;width:1.0px;height:20.0px;background:#cfcfcf;"></div>
<div style="position:absolute;left:804.2px;top:405.8px;font-size:13px;line-height:18px;color:#333;white-space:nowrap;transform:translateX(-50%);">I</div>
<div style="position:absolute;left:839.5px;top:405.0px;width:1.0px;height:20.0px;background:#cfcfcf;"></div>
<div style="position:absolute;left:876.0px;top:405.8px;font-size:13px;line-height:18px;color:#333;white-space:nowrap;transform:translateX(-50%);">J</div>
<div style="position:absolute;left:911.5px;top:405.0px;width:1.0px;height:20.0px;background:#cfcfcf;"></div>
<div style="position:absolute;left:75.0px;top:424.7px;width:840.0px;height:1.0px;background:#bdbdbd;"></div>
<div style="position:absolute;left:46.0px;top:425.2px;width:29.5px;height:342.0px;background:#e6e6e6;"></div>
<div style="position:absolute;left:74.5px;top:425.2px;width:1.0px;height:342.0px;background:#bdbdbd;"></div>
<div style="position:absolute;left:60.0px;top:427.9px;font-size:13.6px;line-height:19px;color:#333;white-space:nowrap;transform:translateX(-50%);">15</div>
<div style="position:absolute;left:46.0px;top:446.6px;width:29.0px;height:1.0px;background:#cfcfcf;"></div>
<div style="position:absolute;left:75.0px;top:446.6px;width:840.0px;height:1.0px;background:#e1e1e1;"></div>
<div style="position:absolute;left:60.0px;top:449.8px;font-size:13.6px;line-height:19px;color:#333;white-space:nowrap;transform:translateX(-50%);">16</div>
<div style="position:absolute;left:46.0px;top:468.4px;width:29.0px;height:1.0px;background:#cfcfcf;"></div>
<div style="position:absolute;left:75.0px;top:468.4px;width:840.0px;height:1.0px;background:#e1e1e1;"></div>
<div style="position:absolute;left:60.0px;top:471.7px;font-size:13.6px;line-height:19px;color:#333;white-space:nowrap;transform:translateX(-50%);">17</div>
<div style="position:absolute;left:46.0px;top:490.3px;width:29.0px;height:1.0px;background:#cfcfcf;"></div>
<div style="position:absolute;left:75.0px;top:490.3px;width:840.0px;height:1.0px;background:#e1e1e1;"></div>
<div style="position:absolute;left:60.0px;top:493.5px;font-size:13.6px;line-height:19px;color:#333;white-space:nowrap;transform:translateX(-50%);">18</div>
<div style="position:absolute;left:46.0px;top:512.2px;width:29.0px;height:1.0px;background:#cfcfcf;"></div>
<div style="position:absolute;left:75.0px;top:512.2px;width:840.0px;height:1.0px;background:#e1e1e1;"></div>
<div style="position:absolute;left:60.0px;top:515.4px;font-size:13.6px;line-height:19px;color:#333;white-space:nowrap;transform:translateX(-50%);">19</div>
<div style="position:absolute;left:46.0px;top:534.0px;width:29.0px;height:1.0px;background:#cfcfcf;"></div>
<div style="position:absolute;left:75.0px;top:534.0px;width:840.0px;height:1.0px;background:#e1e1e1;"></div>
<div style="position:absolute;left:60.0px;top:537.3px;font-size:13.6px;line-height:19px;color:#333;white-space:nowrap;transform:translateX(-50%);">20</div>
<div style="position:absolute;left:46.0px;top:555.9px;width:29.0px;height:1.0px;background:#cfcfcf;"></div>
<div style="position:absolute;left:75.0px;top:555.9px;width:840.0px;height:1.0px;background:#e1e1e1;"></div>
<div style="position:absolute;left:60.0px;top:559.2px;font-size:13.6px;line-height:19px;color:#333;white-space:nowrap;transform:translateX(-50%);">21</div>
<div style="position:absolute;left:46.0px;top:577.8px;width:29.0px;height:1.0px;background:#cfcfcf;"></div>
<div style="position:absolute;left:75.0px;top:577.8px;width:840.0px;height:1.0px;background:#e1e1e1;"></div>
<div style="position:absolute;left:60.0px;top:581.0px;font-size:13.6px;line-height:19px;color:#333;white-space:nowrap;transform:translateX(-50%);">22</div>
<div style="position:absolute;left:46.0px;top:599.7px;width:29.0px;height:1.0px;background:#cfcfcf;"></div>
<div style="position:absolute;left:75.0px;top:599.7px;width:840.0px;height:1.0px;background:#e1e1e1;"></div>
<div style="position:absolute;left:60.0px;top:602.9px;font-size:13.6px;line-height:19px;color:#333;white-space:nowrap;transform:translateX(-50%);">23</div>
<div style="position:absolute;left:46.0px;top:621.5px;width:29.0px;height:1.0px;background:#cfcfcf;"></div>
<div style="position:absolute;left:75.0px;top:621.5px;width:840.0px;height:1.0px;background:#e1e1e1;"></div>
<div style="position:absolute;left:60.0px;top:624.8px;font-size:13.6px;line-height:19px;color:#333;white-space:nowrap;transform:translateX(-50%);">24</div>
<div style="position:absolute;left:46.0px;top:643.4px;width:29.0px;height:1.0px;background:#cfcfcf;"></div>
<div style="position:absolute;left:75.0px;top:643.4px;width:840.0px;height:1.0px;background:#e1e1e1;"></div>
<div style="position:absolute;left:60.0px;top:646.6px;font-size:13.6px;line-height:19px;color:#333;white-space:nowrap;transform:translateX(-50%);">25</div>
<div style="position:absolute;left:46.0px;top:665.3px;width:29.0px;height:1.0px;background:#cfcfcf;"></div>
<div style="position:absolute;left:75.0px;top:665.3px;width:840.0px;height:1.0px;background:#e1e1e1;"></div>
<div style="position:absolute;left:60.0px;top:668.5px;font-size:13.6px;line-height:19px;color:#333;white-space:nowrap;transform:translateX(-50%);">26</div>
<div style="position:absolute;left:46.0px;top:687.1px;width:29.0px;height:1.0px;background:#cfcfcf;"></div>
<div style="position:absolute;left:75.0px;top:687.1px;width:840.0px;height:1.0px;background:#e1e1e1;"></div>
<div style="position:absolute;left:60.0px;top:690.4px;font-size:13.6px;line-height:19px;color:#333;white-space:nowrap;transform:translateX(-50%);">27</div>
<div style="position:absolute;left:46.0px;top:709.0px;width:29.0px;height:1.0px;background:#cfcfcf;"></div>
<div style="position:absolute;left:75.0px;top:709.0px;width:840.0px;height:1.0px;background:#e1e1e1;"></div>
<div style="position:absolute;left:60.0px;top:712.2px;font-size:13.6px;line-height:19px;color:#333;white-space:nowrap;transform:translateX(-50%);">28</div>
<div style="position:absolute;left:46.0px;top:730.9px;width:29.0px;height:1.0px;background:#cfcfcf;"></div>
<div style="position:absolute;left:75.0px;top:730.9px;width:840.0px;height:1.0px;background:#e1e1e1;"></div>
<div style="position:absolute;left:60.0px;top:734.1px;font-size:13.6px;line-height:19px;color:#333;white-space:nowrap;transform:translateX(-50%);">29</div>
<div style="position:absolute;left:46.0px;top:752.8px;width:29.0px;height:1.0px;background:#cfcfcf;"></div>
<div style="position:absolute;left:75.0px;top:752.8px;width:840.0px;height:1.0px;background:#e1e1e1;"></div>
<div style="position:absolute;left:60.0px;top:756.0px;font-size:13.6px;line-height:19px;color:#333;white-space:nowrap;transform:translateX(-50%);">30</div>
<div style="position:absolute;left:46.0px;top:774.6px;width:29.0px;height:1.0px;background:#cfcfcf;"></div>
<div style="position:absolute;left:75.0px;top:774.6px;width:840.0px;height:1.0px;background:#e1e1e1;"></div>
<div style="position:absolute;left:174.5px;top:425.2px;width:1.0px;height:342.0px;background:#e1e1e1;"></div>
<div style="position:absolute;left:248.0px;top:425.2px;width:1.0px;height:342.0px;background:#e1e1e1;"></div>
<div style="position:absolute;left:346.5px;top:425.2px;width:1.0px;height:342.0px;background:#e1e1e1;"></div>
<div style="position:absolute;left:447.5px;top:425.2px;width:1.0px;height:342.0px;background:#e1e1e1;"></div>
<div style="position:absolute;left:519.2px;top:425.2px;width:1.0px;height:342.0px;background:#e1e1e1;"></div>
<div style="position:absolute;left:607.8px;top:425.2px;width:1.0px;height:342.0px;background:#e1e1e1;"></div>
<div style="position:absolute;left:696.2px;top:425.2px;width:1.0px;height:342.0px;background:#e1e1e1;"></div>
<div style="position:absolute;left:767.9px;top:425.2px;width:1.0px;height:342.0px;background:#e1e1e1;"></div>
<div style="position:absolute;left:839.5px;top:425.2px;width:1.0px;height:342.0px;background:#e1e1e1;"></div>
<div style="position:absolute;left:125.0px;top:448.2px;font-size:15.4px;line-height:22px;color:#222;white-space:nowrap;transform:translateX(-50%);">조건</div>
<div style="position:absolute;left:125.0px;top:472.1px;font-size:12.6px;line-height:18px;color:#222;white-space:nowrap;transform:translateX(-50%);">FALSE</div>
<div style="position:absolute;left:125.0px;top:535.7px;font-size:15.4px;line-height:22px;color:#222;white-space:nowrap;transform:translateX(-50%);">고객번호</div>
<div style="position:absolute;left:211.8px;top:535.7px;font-size:15.4px;line-height:22px;color:#222;white-space:nowrap;transform:translateX(-50%);">이름</div>
<div style="position:absolute;left:297.8px;top:535.7px;font-size:15.4px;line-height:22px;color:#222;white-space:nowrap;transform:translateX(-50%);">주소</div>
<div style="position:absolute;left:397.5px;top:535.7px;font-size:15.4px;line-height:22px;color:#222;white-space:nowrap;transform:translateX(-50%);">구매실적</div>
<div style="position:absolute;left:483.9px;top:535.7px;font-size:15.4px;line-height:22px;color:#222;white-space:nowrap;transform:translateX(-50%);">거래회수</div>
<div style="position:absolute;left:564.0px;top:535.7px;font-size:15.4px;line-height:22px;color:#222;white-space:nowrap;transform:translateX(-50%);">구매포인트</div>
<div style="position:absolute;left:652.5px;top:535.7px;font-size:15.4px;line-height:22px;color:#222;white-space:nowrap;transform:translateX(-50%);">설문포인트</div>
<div style="position:absolute;left:125.0px;top:558.6px;font-size:14.2px;line-height:20px;color:#222;white-space:nowrap;transform:translateX(-50%);">B99130</div>
<div style="position:absolute;left:211.8px;top:557.6px;font-size:15.4px;line-height:22px;color:#222;white-space:nowrap;transform:translateX(-50%);">신선해</div>
<div style="position:absolute;left:297.8px;top:557.6px;font-size:15.4px;line-height:22px;color:#222;white-space:nowrap;transform:translateX(-50%);">대전광역시</div>
<div style="position:absolute;left:439.4px;top:558.6px;font-size:14.2px;line-height:20px;color:#222;white-space:nowrap;transform:translateX(-100%);">755,000</div>
<div style="position:absolute;left:483.9px;top:558.6px;font-size:14.2px;line-height:20px;color:#222;white-space:nowrap;transform:translateX(-50%);">35</div>
<div style="position:absolute;left:564.0px;top:558.6px;font-size:14.2px;line-height:20px;color:#222;white-space:nowrap;transform:translateX(-50%);">151</div>
<div style="position:absolute;left:652.5px;top:558.6px;font-size:14.2px;line-height:20px;color:#222;white-space:nowrap;transform:translateX(-50%);">75</div>
<div style="position:absolute;left:125.0px;top:580.4px;font-size:14.2px;line-height:20px;color:#222;white-space:nowrap;transform:translateX(-50%);">A95010</div>
<div style="position:absolute;left:211.8px;top:579.4px;font-size:15.4px;line-height:22px;color:#222;white-space:nowrap;transform:translateX(-50%);">이미지</div>
<div style="position:absolute;left:297.8px;top:579.4px;font-size:15.4px;line-height:22px;color:#222;white-space:nowrap;transform:translateX(-50%);">서울특별시</div>
<div style="position:absolute;left:439.4px;top:580.4px;font-size:14.2px;line-height:20px;color:#222;white-space:nowrap;transform:translateX(-100%);">1,250,000</div>
<div style="position:absolute;left:483.9px;top:580.4px;font-size:14.2px;line-height:20px;color:#222;white-space:nowrap;transform:translateX(-50%);">40</div>
<div style="position:absolute;left:564.0px;top:580.4px;font-size:14.2px;line-height:20px;color:#222;white-space:nowrap;transform:translateX(-50%);">250</div>
<div style="position:absolute;left:652.5px;top:580.4px;font-size:14.2px;line-height:20px;color:#222;white-space:nowrap;transform:translateX(-50%);">85</div>
<div style="position:absolute;left:75.0px;top:533.9px;width:621.7px;height:1.1px;background:#505050;"></div>
<div style="position:absolute;left:75.0px;top:555.8px;width:621.7px;height:1.1px;background:#505050;"></div>
<div style="position:absolute;left:75.0px;top:577.7px;width:621.7px;height:1.1px;background:#505050;"></div>
<div style="position:absolute;left:75.0px;top:599.6px;width:621.7px;height:1.1px;background:#505050;"></div>
<div style="position:absolute;left:74.5px;top:534.5px;width:1.1px;height:65.6px;background:#505050;"></div>
<div style="position:absolute;left:174.4px;top:534.5px;width:1.1px;height:65.6px;background:#505050;"></div>
<div style="position:absolute;left:247.9px;top:534.5px;width:1.1px;height:65.6px;background:#505050;"></div>
<div style="position:absolute;left:346.4px;top:534.5px;width:1.1px;height:65.6px;background:#505050;"></div>
<div style="position:absolute;left:447.4px;top:534.5px;width:1.1px;height:65.6px;background:#505050;"></div>
<div style="position:absolute;left:519.2px;top:534.5px;width:1.1px;height:65.6px;background:#505050;"></div>
<div style="position:absolute;left:607.8px;top:534.5px;width:1.1px;height:65.6px;background:#505050;"></div>
<div style="position:absolute;left:696.2px;top:534.5px;width:1.1px;height:65.6px;background:#505050;"></div>
<div style="position:absolute;left:356.6px;top:577.0px;width:86.8px;height:23.2px;background:transparent;border:2px solid #f02fe8;"></div>
<div style="position:absolute;left:318.0px;top:606.0px;width:8.0px;height:5.0px;background:transparent;border:1px solid #d060d0;"></div>
<svg style="left:320px;top:588px" width="20" height="22" viewBox="0 0 20 22"><path d="M3 4L6 2L16 15L16.5 19.5L12.5 17.5Z" fill="#c8c8c8" stroke="#555" stroke-width="1"/><path d="M12.5 17.5L16 15" stroke="#555" stroke-width="0.8"/></svg>
<div style="position:absolute;left:46.0px;top:767.0px;width:860.0px;height:18.5px;background:#e6e6e6;"></div>
<div style="position:absolute;left:46.0px;top:766.5px;width:860.0px;height:1.0px;background:#c4c4c4;"></div>
<div style="position:absolute;left:63.5px;top:770.0px;font-size:8px;line-height:11px;color:#3d7a5a;white-space:nowrap;transform:translateX(-50%);">◂</div>
<div style="position:absolute;left:81.0px;top:770.0px;font-size:8px;line-height:11px;color:#c8c8c8;white-space:nowrap;transform:translateX(-50%);">▸</div>
<div style="position:absolute;left:98.5px;top:768.0px;font-size:9.5px;line-height:13px;color:#555;white-space:nowrap;transform:translateX(-50%);font-weight:700;">...</div>
<div style="position:absolute;left:108.0px;top:770.0px;width:1.0px;height:12.0px;background:#b5b5b5;"></div>
<div style="position:absolute;left:185.0px;top:770.0px;width:1.0px;height:12.0px;background:#b5b5b5;"></div>
<div style="position:absolute;left:226.5px;top:770.0px;width:1.0px;height:12.0px;background:#b5b5b5;"></div>
<div style="position:absolute;left:146.0px;top:768.5px;font-size:8.8px;line-height:12px;color:#555;white-space:nowrap;transform:translateX(-50%);">무작정따라하기2</div>
<div style="position:absolute;left:205.0px;top:768.5px;font-size:8.8px;line-height:12px;color:#555;white-space:nowrap;transform:translateX(-50%);">기출01</div>
<div style="position:absolute;left:246.5px;top:768.5px;font-size:8.8px;line-height:12px;color:#555;white-space:nowrap;transform:translateX(-50%);">기출02</div>
<div style="position:absolute;left:267.5px;top:767.0px;width:41.0px;height:16.0px;background:#fff;border-bottom:1.6px solid #1d6a46;"></div>
<div style="position:absolute;left:288.0px;top:768.5px;font-size:8.8px;line-height:12px;color:#1d6a46;white-space:nowrap;transform:translateX(-50%);">기출03</div>
<svg style="left:328px;top:770px" width="12" height="12" viewBox="0 0 12 12"><circle cx="6" cy="6" r="5" fill="none" stroke="#777" stroke-width="0.8"/><path d="M3.5 6H8.5M6 3.5V8.5" stroke="#777" stroke-width="0.8"/></svg>
<div style="position:absolute;left:766.0px;top:772.0px;width:1.0px;height:7.0px;background:transparent;background:repeating-linear-gradient(#999 0 1px,transparent 1px 3px);"></div>
<div style="position:absolute;left:776.0px;top:771.5px;width:140.0px;height:9.0px;background:#fff;border:1px solid #cfcfcf;"></div>
<div style="position:absolute;left:776.0px;top:771.5px;width:10.5px;height:9.0px;background:#f0f0f0;border:1px solid #cfcfcf;"></div>
<div style="position:absolute;left:781.0px;top:772.0px;font-size:6px;line-height:8px;color:#444;white-space:nowrap;transform:translateX(-50%);">◂</div>
<div style="position:absolute;left:46.0px;top:785.5px;width:860.0px;height:12.0px;background:#f3f2f1;"></div>
<div style="position:absolute;left:50.0px;top:786.0px;font-size:8.2px;line-height:11px;color:#555;white-space:nowrap;">준비</div>
<div style="position:absolute;left:77.0px;top:788.0px;width:9.0px;height:7.0px;background:transparent;border:1px solid #666;"></div>
<div style="position:absolute;left:46.0px;top:797.0px;width:860.0px;height:1.6px;background:linear-gradient(#9fb8ab,#dfe6e2);"></div>
<div style="position:absolute;left:291.0px;top:805.0px;font-size:17.6px;line-height:25px;color:#1a1a1a;white-space:nowrap;font-weight:500;letter-spacing:-0.3px;-webkit-text-stroke:0.35px #1a1a1a;">‘기출03’ 시트에서 다음과 같이 고급 필터를 수행하시오.</div>
<svg style="left:295px;top:848px" width="12" height="14" viewBox="0 0 12 14"><path d="M0 0L12 7L0 14Z" fill="#1e96e6"/></svg>
<div class="serif" style="position:absolute;left:316.0px;top:842.3px;font-size:18.3px;line-height:26px;color:#303030;white-space:nowrap;">[A3:G13] 영역에서 ‘구매실적’이 두 번째로 크거나 두 번째로 작은 데이터를 표시하시오.</div>
<svg style="left:295px;top:885.5px" width="12" height="14" viewBox="0 0 12 14"><path d="M0 0L12 7L0 14Z" fill="#1e96e6"/></svg>
<div class="serif" style="position:absolute;left:316.0px;top:880.2px;font-size:18.3px;line-height:26px;color:#303030;white-space:nowrap;">조건은 [A16:A17] 영역에 입력하시오. (OR, LARGE, SMALL 함수 사용)</div>
</div>
</div>
<div style="position:absolute;left:627.0px;top:297.0px;width:35.0px;height:32.0px;background:#3b3b3b;border-radius:6px;"></div>
<svg style="left:632px;top:302px" width="25" height="22" viewBox="0 0 25 22"><path d="M13 2.1H21V9.8M2.8 11V17.3H8.8" fill="none" stroke="#fff" stroke-width="1.8"/><path d="M2.2 2.4L9 8.2M9.3 3.6V8.6H4.2" fill="none" stroke="#fff" stroke-width="1.8"/><rect x="10.9" y="11.3" width="12" height="7.8" rx="2.2" fill="#fff"/></svg>
<div style="position:absolute;left:46.0px;top:891.0px;width:860.0px;height:6.3px;background:#3aa6dd;"></div>
<div style="position:absolute;left:46.0px;top:897.0px;width:860.0px;height:40.0px;background:#000;"></div>
<div style="position:absolute;left:62.0px;top:911.0px;width:6.2px;height:21.5px;background:#fff;"></div>
<div style="position:absolute;left:73.8px;top:911.0px;width:6.2px;height:21.5px;background:#fff;"></div>
<svg style="left:110px;top:915px" width="74" height="15" viewBox="0 0 74 15"><path d="M0.5 7.5L10.5 1V14ZM11 7.5L21.5 1V14Z" fill="#fff"/><path d="M50 1L60.5 7.5L50 14ZM61 1L72 7.5L61 14Z" fill="#fff"/></svg>
<div style="position:absolute;left:206.0px;top:907.5px;font-size:18.5px;line-height:26px;color:#fff;white-space:nowrap;">A-B</div>
<div style="position:absolute;left:264.0px;top:910.5px;font-size:15.2px;line-height:21px;color:#3aa6dd;white-space:nowrap;">16:20</div>
<div style="position:absolute;left:311.0px;top:910.5px;font-size:15.2px;line-height:21px;color:#fff;white-space:nowrap;">/</div>
<div style="position:absolute;left:327.0px;top:910.5px;font-size:15.2px;line-height:21px;color:#fff;white-space:nowrap;">16:52</div>
<div style="position:absolute;left:763.0px;top:910.5px;font-size:15.2px;line-height:21px;color:#fff;white-space:nowrap;letter-spacing:-0.3px;">Auto(720P)</div>
<svg style="left:864.5px;top:915px" width="14" height="12" viewBox="0 0 14 12"><path d="M0.5 0.5H13L6.75 11.5Z" fill="#fff"/></svg>
<div style="position:absolute;left:895.0px;top:37.6px;width:1.0px;height:900.0px;background:#808080;"></div>
</div>
<div id="excel"><div id="ein" style="position:absolute;left:-896px;top:0;width:1768px;height:937px;">
<div style="position:absolute;left:896.0px;top:0.0px;width:872.0px;height:37.6px;background:#217346;"></div>
<svg style="left:1530px;top:0" width="238" height="38" viewBox="0 0 238 38"><g fill="none" stroke="#1b6039" stroke-width="3.4"><path d="M17 13.4H232"/><circle cx="12.5" cy="13" r="4.2"/><circle cx="235" cy="13.4" r="4.2"/><circle cx="38" cy="45" r="21" stroke-width="5"/><path d="M100 35H238"/><circle cx="95.5" cy="34.5" r="3.8"/></g><path d="M22 34H50V38H22Z" fill="#1b6039"/></svg>
<svg style="left:921px;top:8px" width="150" height="20" viewBox="0 0 150 20"><path d="M2 2.5H17V17.5H2Z" fill="#5a9e7b"/><rect x="5" y="3.8" width="9" height="5" fill="#217346"/><rect x="5.5" y="12" width="8" height="5.5" fill="#217346"/><rect x="7" y="13.4" width="2.4" height="3.2" fill="#5a9e7b"/><path d="M38 7.2H46.5A4.6 4.6 0 0 1 46.5 16.6H42" fill="none" stroke="#fff" stroke-width="2.2"/><path d="M42.5 2.2L37.2 7.2L42.5 12.2" fill="none" stroke="#fff" stroke-width="2.2"/><path d="M62 7L65 10L68 7" fill="none" stroke="#fff" stroke-width="1.3"/><path d="M101 7.2H92.5A4.6 4.6 0 0 0 92.5 16.6H95" fill="none" stroke="#4f9572" stroke-width="2.8"/><path d="M96.5 2.2L101.8 7.2L96.5 12.2" fill="none" stroke="#4f9572" stroke-width="2.8"/><path d="M110 7L113 10L116 7" fill="none" stroke="#5a9577" stroke-width="1.3"/><path d="M137.5 8H143.5M137.5 10.6H143.5L140.5 13.6Z" fill="#fff" stroke="#fff" stroke-width="1"/></svg>
<div style="position:absolute;left:1458.0px;top:5.0px;font-size:15.7px;line-height:22px;color:#a5c7b4;white-space:nowrap;">섹션03문제&nbsp;&nbsp;-&nbsp;&nbsp;<span style="font-size:14.6px">Excel</span></div>
<div style="position:absolute;left:896.0px;top:37.6px;width:872.0px;height:160.0px;background:#f3f2f1;"></div>
<div style="position:absolute;left:930.5px;top:45.8px;font-size:18.4px;line-height:26px;color:#444;white-space:nowrap;transform:translateX(-50%);">파일</div>
<div style="position:absolute;left:986.0px;top:45.8px;font-size:18.4px;line-height:26px;color:#444;white-space:nowrap;transform:translateX(-50%);">홈</div>
<div style="position:absolute;left:1039.0px;top:45.8px;font-size:18.4px;line-height:26px;color:#444;white-space:nowrap;transform:translateX(-50%);">삽입</div>
<div style="position:absolute;left:1145.0px;top:45.8px;font-size:18.4px;line-height:26px;color:#444;white-space:nowrap;transform:translateX(-50%);">페이지 레이아웃</div>
<div style="position:absolute;left:1252.0px;top:45.8px;font-size:18.4px;line-height:26px;color:#444;white-space:nowrap;transform:translateX(-50%);">수식</div>
<div style="position:absolute;left:1391.0px;top:45.8px;font-size:18.4px;line-height:26px;color:#444;white-space:nowrap;transform:translateX(-50%);">검토</div>
<div style="position:absolute;left:1452.0px;top:45.8px;font-size:18.4px;line-height:26px;color:#444;white-space:nowrap;transform:translateX(-50%);">보기</div>
<div style="position:absolute;left:1533.0px;top:45.8px;font-size:18.4px;line-height:26px;color:#444;white-space:nowrap;transform:translateX(-50%);">개발 도구</div>
<div style="position:absolute;left:1622.5px;top:45.8px;font-size:18.4px;line-height:26px;color:#444;white-space:nowrap;transform:translateX(-50%);">도움말</div>
<div style="position:absolute;left:1321.5px;top:45.8px;font-size:18.3px;line-height:26px;color:#333;white-space:nowrap;transform:translateX(-50%);font-weight:500;-webkit-text-stroke:0.45px #333;">데이터</div>
<div style="position:absolute;left:1296.0px;top:70.6px;width:51.0px;height:3.4px;background:#217346;"></div>
<svg style="left:1690px;top:46px" width="20" height="24" viewBox="0 0 20 24"><path d="M10 2A6.3 6.3 0 0 0 6.2 13.3Q7 14.3 7 16H13Q13 14.3 13.8 13.3A6.3 6.3 0 0 0 10 2ZM7.2 18.6H12.8M8 21H12" fill="none" stroke="#444" stroke-width="1.4"/></svg>
<div style="position:absolute;left:1727.0px;top:45.8px;font-size:18.4px;line-height:26px;color:#444;white-space:nowrap;">어떤 작업을</div>
<svg style="left:920px;top:82px" width="42" height="42" viewBox="0 0 42 42"><path d="M8 0H14L9 9H13L2 23L6 12H1Z" fill="#d8d6da"/><ellipse cx="21" cy="10" rx="9" ry="4" fill="#b8b6bb"/><path d="M12 10V30Q12 34 21 34Q30 34 30 30V10Q30 14 21 14Q12 14 12 10Z" fill="#b8b6bb"/><rect x="21" y="24" width="19" height="15" fill="#f7f6f5" stroke="#b3b1b6" stroke-width="1.3"/><rect x="21" y="24" width="19" height="3.6" fill="#b3b1b6"/><path d="M21 31.5H40M21 35.2H40M27.3 27V39M33.6 27V39" stroke="#b3b1b6" stroke-width="1"/></svg>
<div style="position:absolute;left:941.0px;top:123.9px;font-size:16.6px;line-height:23px;color:#a8a6a4;white-space:nowrap;transform:translateX(-50%);">데이터 가</div>
<div style="position:absolute;left:941.0px;top:143.9px;font-size:16.6px;line-height:23px;color:#a8a6a4;white-space:nowrap;transform:translateX(-50%);">져오기 ⌄</div>
<svg style="left:982.0px;top:83.0px" width="20" height="20" viewBox="0 0 20 20"><path d="M1.5 1.5H10L14 5.5V18H1.5Z" fill="#f7f6f5" stroke="#b3b1b6" stroke-width="1.2"/><path d="M10 1.5V5.5H14" fill="none" stroke="#b3b1b6" stroke-width="1.2"/><rect x="9" y="10" width="8" height="8.5" fill="#f7f6f5" stroke="#b3b1b6" stroke-width="1"/><path d="M11 12.7H15M11 14.6H15M11 16.5H15" stroke="#b3b1b6" stroke-width="0.8"/></svg><div style="position:absolute;left:1005.5px;top:82.9px;font-size:16.4px;line-height:23px;color:#a8a6a4;white-space:nowrap;">텍스트/<span style="font-size:15px">CSV</span></div>
<svg style="left:982.0px;top:112.0px" width="20" height="20" viewBox="0 0 20 20"><path d="M1.5 1.5H10L14 5.5V18H1.5Z" fill="#f7f6f5" stroke="#b3b1b6" stroke-width="1.2"/><path d="M10 1.5V5.5H14" fill="none" stroke="#b3b1b6" stroke-width="1.2"/><circle cx="13.5" cy="14.5" r="4.6" fill="#f7f6f5" stroke="#b3b1b6" stroke-width="1.2"/><path d="M9 14.5H18M13.5 10V19" stroke="#b3b1b6" stroke-width="0.9"/></svg><div style="position:absolute;left:1005.5px;top:111.9px;font-size:16.4px;line-height:23px;color:#a8a6a4;white-space:nowrap;">웹</div>
<svg style="left:981.0px;top:141.0px" width="20" height="20" viewBox="0 0 20 20"><rect x="0.8" y="1" width="17.6" height="18" fill="#f7f6f5" stroke="#b3b1b6" stroke-width="1.2"/><rect x="0.8" y="1" width="17.6" height="3.6" fill="#b3b1b6"/><path d="M0.8 8.5H18.4M0.8 12H18.4M0.8 15.5H18.4M6.6 4.6V19M12.5 4.6V19" stroke="#b3b1b6" stroke-width="1"/></svg><div style="position:absolute;left:1004.5px;top:140.9px;font-size:16.4px;line-height:23px;color:#a8a6a4;white-space:nowrap;">테이블/범위에서</div>
<svg style="left:1129.0px;top:83.0px" width="20" height="20" viewBox="0 0 20 20"><path d="M1.5 1.5H10L14 5.5V18H1.5Z" fill="#f7f6f5" stroke="#b3b1b6" stroke-width="1.2"/><path d="M10 1.5V5.5H14" fill="none" stroke="#b3b1b6" stroke-width="1.2"/><circle cx="13.5" cy="14.5" r="4.6" fill="#f7f6f5" stroke="#b3b1b6" stroke-width="1.2"/><path d="M13.5 11.5V14.8H16" fill="none" stroke="#b3b1b6" stroke-width="1"/></svg><div style="position:absolute;left:1152.5px;top:82.9px;font-size:16.4px;line-height:23px;color:#a8a6a4;white-space:nowrap;">최근에 사용한 원본</div>
<svg style="left:1129.0px;top:112.0px" width="20" height="20" viewBox="0 0 20 20"><path d="M1.5 1.5H10L14 5.5V18H1.5Z" fill="#f7f6f5" stroke="#b3b1b6" stroke-width="1.2"/><path d="M10 1.5V5.5H14" fill="none" stroke="#b3b1b6" stroke-width="1.2"/><path d="M4 7H11M4 9.5H11M4 12H9M4 14.5H9" stroke="#b3b1b6" stroke-width="0.9"/><rect x="10.5" y="9.5" width="7" height="9.5" rx="2.5" fill="#c9c7cb"/></svg><div style="position:absolute;left:1152.5px;top:111.9px;font-size:16.4px;line-height:23px;color:#a8a6a4;white-space:nowrap;">기존 연결</div>
<div style="position:absolute;left:1098.0px;top:174.9px;font-size:16.3px;line-height:23px;color:#444;white-space:nowrap;transform:translateX(-50%);">데이터 가져오기 및 변환</div>
<div style="position:absolute;left:1300.0px;top:81.0px;width:1.0px;height:110.5px;background:#c8c6c4;"></div>
<svg style="left:1327px;top:82px" width="42" height="42" viewBox="0 0 42 42"><path d="M3 36V2.8H20.5" fill="none" stroke="#b3b1b6" stroke-width="1.1"/><path d="M6 37V5H22.5" fill="none" stroke="#b3b1b6" stroke-width="1.1"/><path d="M9 7.6H24L32.7 16V39.5H9Z" fill="#f5f2f7" stroke="#b3b1b6" stroke-width="1.2"/><path d="M24 7.6V16H32.7" fill="none" stroke="#b3b1b6" stroke-width="1.2"/><circle cx="30" cy="32" r="9.6" fill="#f3f2f1"/><path d="M23.4 30.5A6.8 6.8 0 0 1 35.6 28" fill="none" stroke="#bdbbc0" stroke-width="3"/><path d="M38.6 24.2V30.6H32.2Z" fill="#bdbbc0"/><path d="M36.6 33.5A6.8 6.8 0 0 1 24.4 36" fill="none" stroke="#bdbbc0" stroke-width="3"/><path d="M21.4 39.8V33.4H27.8Z" fill="#bdbbc0"/></svg>
<div style="position:absolute;left:1346.0px;top:123.9px;font-size:16.6px;line-height:23px;color:#a8a6a4;white-space:nowrap;transform:translateX(-50%);">모두 새로</div>
<div style="position:absolute;left:1346.0px;top:143.9px;font-size:16.6px;line-height:23px;color:#a8a6a4;white-space:nowrap;transform:translateX(-50%);">고침 ⌄</div>
<svg style="left:1385.0px;top:84.5px" width="20" height="20" viewBox="0 0 20 20"><rect x="0.8" y="2" width="18" height="16" fill="#f7f6f5" stroke="#b3b1b6" stroke-width="1.2"/><rect x="0.8" y="2" width="18" height="3.4" fill="#b3b1b6"/><path d="M10 5.4V18M12 8.5H17M12 11.5H17M12 14.5H17" stroke="#b3b1b6" stroke-width="1"/></svg><div style="position:absolute;left:1408.5px;top:84.4px;font-size:16.4px;line-height:23px;color:#a8a6a4;white-space:nowrap;">쿼리 및 연결</div>
<svg style="left:1386.0px;top:114.0px" width="20" height="20" viewBox="0 0 20 20"><rect x="1" y="1.5" width="15.5" height="17" fill="#f7f6f5" stroke="#b3b1b6" stroke-width="1.2"/><rect x="1" y="1.5" width="15.5" height="3" fill="#b3b1b6"/><path d="M4 8.5H5.5M7.5 8.5H14M4 11.8H5.5M7.5 11.8H14M4 15H5.5M7.5 15H14" stroke="#b3b1b6" stroke-width="1"/></svg><div style="position:absolute;left:1409.5px;top:113.9px;font-size:16.4px;line-height:23px;color:#a8a6a4;white-space:nowrap;">속성</div>
<svg style="left:1386.0px;top:144.0px" width="20" height="20" viewBox="0 0 20 20"><path d="M1.5 1.5H10L14 5.5V18H1.5Z" fill="#f7f6f5" stroke="#b3b1b6" stroke-width="1.2"/><path d="M10 1.5V5.5H14" fill="none" stroke="#b3b1b6" stroke-width="1.2"/><rect x="2" y="12" width="17" height="8" fill="#f3f2f1"/><rect x="3.5" y="13.2" width="9" height="5.6" rx="2.8" fill="none" stroke="#aaa8ad" stroke-width="1.9"/><rect x="9.5" y="13.2" width="9" height="5.6" rx="2.8" fill="none" stroke="#aaa8ad" stroke-width="1.9"/></svg><div style="position:absolute;left:1409.5px;top:143.9px;font-size:16.4px;line-height:23px;color:#a8a6a4;white-space:nowrap;">연결 편집</div>
<div style="position:absolute;left:1405.8px;top:174.9px;font-size:16.3px;line-height:23px;color:#444;white-space:nowrap;transform:translateX(-50%);">쿼리 및 연결</div>
<div style="position:absolute;left:1511.7px;top:81.0px;width:1.0px;height:110.5px;background:#c8c6c4;"></div>
<div style="position:absolute;left:1532.7px;top:93.4px;font-size:11.5px;line-height:16px;color:#a8a6a4;white-space:nowrap;transform:translateX(-50%);font-weight:500;">ㄱ</div>
<div style="position:absolute;left:1532.7px;top:102.2px;font-size:11.5px;line-height:16px;color:#a8a6a4;white-space:nowrap;transform:translateX(-50%);font-weight:500;">ㅎ</div>
<svg style="left:1538px;top:96px" width="10" height="19" viewBox="0 0 10 19"><path d="M4.6 0V17.5M1.2 13.6L4.6 17.8L8 13.6" fill="none" stroke="#a8a6a4" stroke-width="1.2"/></svg>
<div style="position:absolute;left:1532.7px;top:134.0px;font-size:11.5px;line-height:16px;color:#a8a6a4;white-space:nowrap;transform:translateX(-50%);font-weight:500;">ㅎ</div>
<div style="position:absolute;left:1532.7px;top:143.6px;font-size:11.5px;line-height:16px;color:#a8a6a4;white-space:nowrap;transform:translateX(-50%);font-weight:500;">ㄱ</div>
<svg style="left:1538px;top:136px" width="10" height="20" viewBox="0 0 10 20"><path d="M4.6 0V18.3M1.2 14.4L4.6 18.6L8 14.4" fill="none" stroke="#a8a6a4" stroke-width="1.2"/></svg>
<svg style="left:1559px;top:88px" width="36" height="32" viewBox="0 0 36 32"><rect x="0.6" y="0.6" width="34" height="30" rx="1" fill="#f5f2f7" stroke="#b3b1b6" stroke-width="1.2"/><rect x="0.6" y="0.6" width="34" height="4.4" fill="#b3b1b6"/><path d="M17.4 5V30.6" stroke="#b3b1b6" stroke-width="1.2"/></svg>
<div style="position:absolute;left:1568.0px;top:92.6px;font-size:12.5px;line-height:18px;color:#a9a7ac;white-space:nowrap;transform:translateX(-50%);font-weight:700;">ㄱ</div>
<div style="position:absolute;left:1568.0px;top:101.6px;font-size:12.5px;line-height:18px;color:#a9a7ac;white-space:nowrap;transform:translateX(-50%);font-weight:700;">ㅎ</div>
<div style="position:absolute;left:1585.5px;top:91.6px;font-size:12.5px;line-height:18px;color:#a9a7ac;white-space:nowrap;transform:translateX(-50%);font-weight:700;">ㅎ</div>
<div style="position:absolute;left:1585.5px;top:101.8px;font-size:12.5px;line-height:18px;color:#a9a7ac;white-space:nowrap;transform:translateX(-50%);font-weight:700;">ㄱ</div>
<div style="position:absolute;left:1577.0px;top:123.9px;font-size:16.6px;line-height:23px;color:#a8a6a4;white-space:nowrap;transform:translateX(-50%);">정렬</div>
<div style="position:absolute;left:1608.0px;top:88.0px;width:1.0px;height:73.0px;background:#dcdad8;"></div>
<svg style="left:1623px;top:86px" width="34" height="34" viewBox="0 0 34 34"><path d="M0.5 1H33.5L19.7 16.5V32.5H14.3V16.5Z" fill="#b5b3b8"/></svg>
<div style="position:absolute;left:1640.0px;top:123.9px;font-size:16.6px;line-height:23px;color:#a8a6a4;white-space:nowrap;transform:translateX(-50%);">필터</div>
<svg style="left:1671.0px;top:84.5px" width="20" height="20" viewBox="0 0 20 20"><path d="M0.5 1H14.5L9 7.5V15H6V7.5Z" fill="#b0aeb3"/><path d="M10 11L18 19M18 11L10 19" stroke="#b0aeb3" stroke-width="1.7"/></svg><div style="position:absolute;left:1694.5px;top:84.4px;font-size:16.4px;line-height:23px;color:#a8a6a4;white-space:nowrap;">지우기</div>
<svg style="left:1671.0px;top:114.5px" width="20" height="20" viewBox="0 0 20 20"><path d="M0.5 1H14.5L9 7.5V15H6V7.5Z" fill="#b0aeb3"/><circle cx="13" cy="13.5" r="4.4" fill="none" stroke="#b0aeb3" stroke-width="1.8"/></svg><div style="position:absolute;left:1694.5px;top:114.4px;font-size:16.4px;line-height:23px;color:#a8a6a4;white-space:nowrap;">다시 적용</div>
<svg style="left:1671.0px;top:144.0px" width="20" height="20" viewBox="0 0 20 20"><path d="M0.5 1H14.5L9 7.5V15H6V7.5Z" fill="#b0aeb3"/><path d="M8 19L9 15.5L16 8.5L18.5 11L11.5 18Z" fill="#b0aeb3"/></svg><div style="position:absolute;left:1694.5px;top:143.9px;font-size:16.4px;line-height:23px;color:#a8a6a4;white-space:nowrap;">고급</div>
<div style="position:absolute;left:1644.5px;top:174.9px;font-size:16.3px;line-height:23px;color:#444;white-space:nowrap;transform:translateX(-50%);">정렬 및 필터</div>
<div style="position:absolute;left:896.0px;top:197.0px;width:872.0px;height:9.0px;background:linear-gradient(#d6d6d6,#e6e6e6);"></div>
<div style="position:absolute;left:896.0px;top:205.0px;width:872.0px;height:52.5px;background:#e6e6e6;"></div>
<div style="position:absolute;left:902.0px;top:210.2px;width:126.5px;height:34.4px;background:#fff;border:1px solid #c8c8c8;"></div>
<svg style="left:1013px;top:224px" width="9" height="6" viewBox="0 0 9 6"><path d="M0.5 0.5H8L4.25 5Z" fill="#777"/></svg>
<div style="position:absolute;left:1046.0px;top:221.0px;width:3.0px;height:14.0px;background:transparent;background:repeating-linear-gradient(#b0b0b0 0 2px,transparent 2px 5px);"></div>
<div style="position:absolute;left:1066.0px;top:210.2px;width:136.5px;height:34.4px;background:#fff;border:1px solid #c8c8c8;"></div>
<svg style="left:1081px;top:220px" width="16" height="16" viewBox="0 0 16 16"><path d="M1.5 1.5L14 14M14 1.5L1.5 14" stroke="#c6c6c6" stroke-width="1.7"/></svg>
<svg style="left:1126px;top:220px" width="18" height="16" viewBox="0 0 18 16"><path d="M1 8.5L6.5 14L17 1.5" fill="none" stroke="#c6c6c6" stroke-width="2"/></svg>
<div class="serif" style="position:absolute;left:1178.0px;top:213.0px;font-size:19px;line-height:27px;color:#5a5a5a;white-space:nowrap;transform:translateX(-50%);font-weight:700;"><i>f</i><span style="font-size:12px;font-style:italic">x</span></div>
<div style="position:absolute;left:1206.0px;top:210.2px;width:580.0px;height:34.4px;background:#fff;border:1px solid #c8c8c8;"></div>
<div style="position:absolute;left:1219.0px;top:215.1px;font-size:18px;line-height:25px;color:#444;white-space:nowrap;">900000</div>
<div style="position:absolute;left:896.0px;top:257.4px;width:872.0px;height:28.0px;background:#e6e6e6;"></div>
<svg style="left:907px;top:261px" width="23" height="22" viewBox="0 0 23 22"><path d="M22 0.5V21H1Z" fill="#b7b7b7"/></svg>
<div style="position:absolute;left:995.0px;top:258.0px;font-size:18px;line-height:25px;color:#262626;white-space:nowrap;transform:translateX(-50%);">A</div>
<div style="position:absolute;left:1056.9px;top:257.4px;width:1.0px;height:28.0px;background:#c6c6c6;"></div>
<div style="position:absolute;left:1103.3px;top:258.0px;font-size:18px;line-height:25px;color:#262626;white-space:nowrap;transform:translateX(-50%);">B</div>
<div style="position:absolute;left:1148.8px;top:257.4px;width:1.0px;height:28.0px;background:#c6c6c6;"></div>
<div style="position:absolute;left:1210.3px;top:258.0px;font-size:18px;line-height:25px;color:#262626;white-space:nowrap;transform:translateX(-50%);">C</div>
<div style="position:absolute;left:1270.9px;top:257.4px;width:1.0px;height:28.0px;background:#c6c6c6;"></div>
<div style="position:absolute;left:1271.9px;top:257.4px;width:125.8px;height:28.0px;background:#d2d2d2;"></div>
<div style="position:absolute;left:1271.4px;top:283.0px;width:126.3px;height:2.4px;background:#217346;"></div>
<div style="position:absolute;left:1334.6px;top:258.0px;font-size:18px;line-height:25px;color:#217346;white-space:nowrap;transform:translateX(-50%);">D</div>
<div style="position:absolute;left:1397.2px;top:257.4px;width:1.0px;height:28.0px;background:#c6c6c6;"></div>
<div style="position:absolute;left:1441.6px;top:258.0px;font-size:18px;line-height:25px;color:#262626;white-space:nowrap;transform:translateX(-50%);">E</div>
<div style="position:absolute;left:1485.0px;top:257.4px;width:1.0px;height:28.0px;background:#c6c6c6;"></div>
<div style="position:absolute;left:1540.5px;top:258.0px;font-size:18px;line-height:25px;color:#262626;white-space:nowrap;transform:translateX(-50%);">F</div>
<div style="position:absolute;left:1594.9px;top:257.4px;width:1.0px;height:28.0px;background:#c6c6c6;"></div>
<div style="position:absolute;left:1650.5px;top:258.0px;font-size:18px;line-height:25px;color:#262626;white-space:nowrap;transform:translateX(-50%);">G</div>
<div style="position:absolute;left:1705.1px;top:257.4px;width:1.0px;height:28.0px;background:#c6c6c6;"></div>
<div style="position:absolute;left:1749.5px;top:258.0px;font-size:18px;line-height:25px;color:#262626;white-space:nowrap;transform:translateX(-50%);">H</div>
<div style="position:absolute;left:1804.5px;top:257.4px;width:1.0px;height:28.0px;background:#c6c6c6;"></div>
<div style="position:absolute;left:932.6px;top:284.8px;width:900.0px;height:1.2px;background:#9f9f9f;"></div>
<div style="position:absolute;left:896.0px;top:284.7px;width:36.6px;height:1.2px;background:#b4b4b4;"></div>
<div style="position:absolute;left:932.0px;top:259.4px;width:1.1px;height:26.0px;background:#b4b4b4;"></div>
<div style="position:absolute;left:896.0px;top:285.5px;width:36.6px;height:628.0px;background:#e6e6e6;"></div>
<div style="position:absolute;left:932.0px;top:285.5px;width:1.2px;height:628.0px;background:#9f9f9f;"></div>
<div style="position:absolute;left:914.5px;top:288.5px;font-size:18px;line-height:25px;color:#262626;white-space:nowrap;transform:translateX(-50%);">1</div>
<div style="position:absolute;left:896.0px;top:313.9px;width:36.6px;height:1.2px;background:#c6c6c6;"></div>
<div style="position:absolute;left:933.0px;top:313.9px;width:840.0px;height:1.2px;background:#d4d4d4;"></div>
<div style="position:absolute;left:914.5px;top:317.5px;font-size:18px;line-height:25px;color:#262626;white-space:nowrap;transform:translateX(-50%);">2</div>
<div style="position:absolute;left:896.0px;top:342.9px;width:36.6px;height:1.2px;background:#c6c6c6;"></div>
<div style="position:absolute;left:933.0px;top:342.9px;width:840.0px;height:1.2px;background:#d4d4d4;"></div>
<div style="position:absolute;left:914.5px;top:346.5px;font-size:18px;line-height:25px;color:#262626;white-space:nowrap;transform:translateX(-50%);">3</div>
<div style="position:absolute;left:896.0px;top:371.9px;width:36.6px;height:1.2px;background:#c6c6c6;"></div>
<div style="position:absolute;left:933.0px;top:371.9px;width:840.0px;height:1.2px;background:#d4d4d4;"></div>
<div style="position:absolute;left:914.5px;top:375.5px;font-size:18px;line-height:25px;color:#262626;white-space:nowrap;transform:translateX(-50%);">4</div>
<div style="position:absolute;left:896.0px;top:400.9px;width:36.6px;height:1.2px;background:#c6c6c6;"></div>
<div style="position:absolute;left:933.0px;top:400.9px;width:840.0px;height:1.2px;background:#d4d4d4;"></div>
<div style="position:absolute;left:914.5px;top:404.5px;font-size:18px;line-height:25px;color:#262626;white-space:nowrap;transform:translateX(-50%);">5</div>
<div style="position:absolute;left:896.0px;top:429.9px;width:36.6px;height:1.2px;background:#c6c6c6;"></div>
<div style="position:absolute;left:933.0px;top:429.9px;width:840.0px;height:1.2px;background:#d4d4d4;"></div>
<div style="position:absolute;left:914.5px;top:433.5px;font-size:18px;line-height:25px;color:#262626;white-space:nowrap;transform:translateX(-50%);">6</div>
<div style="position:absolute;left:896.0px;top:458.9px;width:36.6px;height:1.2px;background:#c6c6c6;"></div>
<div style="position:absolute;left:933.0px;top:458.9px;width:840.0px;height:1.2px;background:#d4d4d4;"></div>
<div style="position:absolute;left:914.5px;top:462.5px;font-size:18px;line-height:25px;color:#262626;white-space:nowrap;transform:translateX(-50%);">7</div>
<div style="position:absolute;left:896.0px;top:487.9px;width:36.6px;height:1.2px;background:#c6c6c6;"></div>
<div style="position:absolute;left:933.0px;top:487.9px;width:840.0px;height:1.2px;background:#d4d4d4;"></div>
<div style="position:absolute;left:914.5px;top:491.5px;font-size:18px;line-height:25px;color:#262626;white-space:nowrap;transform:translateX(-50%);">8</div>
<div style="position:absolute;left:896.0px;top:516.9px;width:36.6px;height:1.2px;background:#c6c6c6;"></div>
<div style="position:absolute;left:933.0px;top:516.9px;width:840.0px;height:1.2px;background:#d4d4d4;"></div>
<div style="position:absolute;left:914.5px;top:520.5px;font-size:18px;line-height:25px;color:#262626;white-space:nowrap;transform:translateX(-50%);">9</div>
<div style="position:absolute;left:896.0px;top:545.9px;width:36.6px;height:1.2px;background:#c6c6c6;"></div>
<div style="position:absolute;left:933.0px;top:545.9px;width:840.0px;height:1.2px;background:#d4d4d4;"></div>
<div style="position:absolute;left:914.5px;top:549.5px;font-size:18px;line-height:25px;color:#262626;white-space:nowrap;transform:translateX(-50%);">10</div>
<div style="position:absolute;left:896.0px;top:574.9px;width:36.6px;height:1.2px;background:#c6c6c6;"></div>
<div style="position:absolute;left:933.0px;top:574.9px;width:840.0px;height:1.2px;background:#d4d4d4;"></div>
<div style="position:absolute;left:914.5px;top:578.5px;font-size:18px;line-height:25px;color:#262626;white-space:nowrap;transform:translateX(-50%);">11</div>
<div style="position:absolute;left:896.0px;top:603.9px;width:36.6px;height:1.2px;background:#c6c6c6;"></div>
<div style="position:absolute;left:933.0px;top:603.9px;width:840.0px;height:1.2px;background:#d4d4d4;"></div>
<div style="position:absolute;left:914.5px;top:607.5px;font-size:18px;line-height:25px;color:#262626;white-space:nowrap;transform:translateX(-50%);">12</div>
<div style="position:absolute;left:896.0px;top:632.9px;width:36.6px;height:1.2px;background:#c6c6c6;"></div>
<div style="position:absolute;left:933.0px;top:632.9px;width:840.0px;height:1.2px;background:#d4d4d4;"></div>
<div style="position:absolute;left:914.5px;top:636.5px;font-size:18px;line-height:25px;color:#262626;white-space:nowrap;transform:translateX(-50%);">13</div>
<div style="position:absolute;left:896.0px;top:661.9px;width:36.6px;height:1.2px;background:#c6c6c6;"></div>
<div style="position:absolute;left:933.0px;top:661.9px;width:840.0px;height:1.2px;background:#d4d4d4;"></div>
<div style="position:absolute;left:914.5px;top:665.5px;font-size:18px;line-height:25px;color:#262626;white-space:nowrap;transform:translateX(-50%);">14</div>
<div style="position:absolute;left:896.0px;top:690.9px;width:36.6px;height:1.2px;background:#c6c6c6;"></div>
<div style="position:absolute;left:933.0px;top:690.9px;width:840.0px;height:1.2px;background:#d4d4d4;"></div>
<div style="position:absolute;left:914.5px;top:694.5px;font-size:18px;line-height:25px;color:#262626;white-space:nowrap;transform:translateX(-50%);">15</div>
<div style="position:absolute;left:896.0px;top:719.9px;width:36.6px;height:1.2px;background:#c6c6c6;"></div>
<div style="position:absolute;left:933.0px;top:719.9px;width:840.0px;height:1.2px;background:#d4d4d4;"></div>
<div style="position:absolute;left:914.5px;top:723.5px;font-size:18px;line-height:25px;color:#262626;white-space:nowrap;transform:translateX(-50%);">16</div>
<div style="position:absolute;left:896.0px;top:748.9px;width:36.6px;height:1.2px;background:#c6c6c6;"></div>
<div style="position:absolute;left:933.0px;top:748.9px;width:840.0px;height:1.2px;background:#d4d4d4;"></div>
<div style="position:absolute;left:914.5px;top:752.5px;font-size:18px;line-height:25px;color:#262626;white-space:nowrap;transform:translateX(-50%);">17</div>
<div style="position:absolute;left:896.0px;top:777.9px;width:36.6px;height:1.2px;background:#c6c6c6;"></div>
<div style="position:absolute;left:933.0px;top:777.9px;width:840.0px;height:1.2px;background:#d4d4d4;"></div>
<div style="position:absolute;left:914.5px;top:781.5px;font-size:18px;line-height:25px;color:#262626;white-space:nowrap;transform:translateX(-50%);">18</div>
<div style="position:absolute;left:896.0px;top:806.9px;width:36.6px;height:1.2px;background:#c6c6c6;"></div>
<div style="position:absolute;left:933.0px;top:806.9px;width:840.0px;height:1.2px;background:#d4d4d4;"></div>
<div style="position:absolute;left:914.5px;top:810.5px;font-size:18px;line-height:25px;color:#262626;white-space:nowrap;transform:translateX(-50%);">19</div>
<div style="position:absolute;left:896.0px;top:835.9px;width:36.6px;height:1.2px;background:#c6c6c6;"></div>
<div style="position:absolute;left:933.0px;top:835.9px;width:840.0px;height:1.2px;background:#d4d4d4;"></div>
<div style="position:absolute;left:914.5px;top:839.5px;font-size:18px;line-height:25px;color:#262626;white-space:nowrap;transform:translateX(-50%);">20</div>
<div style="position:absolute;left:896.0px;top:864.9px;width:36.6px;height:1.2px;background:#c6c6c6;"></div>
<div style="position:absolute;left:933.0px;top:864.9px;width:840.0px;height:1.2px;background:#d4d4d4;"></div>
<div style="position:absolute;left:914.5px;top:868.5px;font-size:18px;line-height:25px;color:#262626;white-space:nowrap;transform:translateX(-50%);">21</div>
<div style="position:absolute;left:896.0px;top:893.9px;width:36.6px;height:1.2px;background:#c6c6c6;"></div>
<div style="position:absolute;left:933.0px;top:893.9px;width:840.0px;height:1.2px;background:#d4d4d4;"></div>
<div style="position:absolute;left:914.5px;top:897.5px;font-size:18px;line-height:25px;color:#262626;white-space:nowrap;transform:translateX(-50%);">22</div>
<div style="position:absolute;left:896.0px;top:922.9px;width:36.6px;height:1.2px;background:#c6c6c6;"></div>
<div style="position:absolute;left:933.0px;top:922.9px;width:840.0px;height:1.2px;background:#d4d4d4;"></div>
<div style="position:absolute;left:1057.0px;top:314.5px;width:1.1px;height:628.0px;background:#d4d4d4;"></div>
<div style="position:absolute;left:1149.0px;top:314.5px;width:1.1px;height:628.0px;background:#d4d4d4;"></div>
<div style="position:absolute;left:1271.0px;top:314.5px;width:1.1px;height:628.0px;background:#d4d4d4;"></div>
<div style="position:absolute;left:1397.0px;top:314.5px;width:1.1px;height:628.0px;background:#d4d4d4;"></div>
<div style="position:absolute;left:1485.0px;top:314.5px;width:1.1px;height:628.0px;background:#d4d4d4;"></div>
<div style="position:absolute;left:1595.0px;top:314.5px;width:1.1px;height:628.0px;background:#d4d4d4;"></div>
<div style="position:absolute;left:1705.0px;top:314.5px;width:1.1px;height:628.0px;background:#d4d4d4;"></div>
<div style="position:absolute;left:1705.0px;top:285.5px;width:1.1px;height:29.0px;background:#d4d4d4;"></div>
<div style="position:absolute;left:933.4px;top:285.9px;width:771.6px;height:27.8px;background:#fff;"></div>
<div style="position:absolute;left:1319.1px;top:284.0px;font-size:22.4px;line-height:31px;color:#000;white-space:nowrap;transform:translateX(-50%);letter-spacing:2.6px;font-family:'NanumGothic','Noto Sans CJK KR',sans-serif;">고객포인트 관리</div>
<div style="position:absolute;left:995.0px;top:345.6px;font-size:18.7px;line-height:26px;color:#000;white-space:nowrap;transform:translateX(-50%);letter-spacing:0.35px;">고객번호</div>
<div style="position:absolute;left:1103.3px;top:345.6px;font-size:18.7px;line-height:26px;color:#000;white-space:nowrap;transform:translateX(-50%);letter-spacing:0.35px;">이름</div>
<div style="position:absolute;left:1210.3px;top:345.6px;font-size:18.7px;line-height:26px;color:#000;white-space:nowrap;transform:translateX(-50%);letter-spacing:0.35px;">주소</div>
<div style="position:absolute;left:1334.6px;top:345.6px;font-size:18.7px;line-height:26px;color:#000;white-space:nowrap;transform:translateX(-50%);letter-spacing:0.35px;">구매실적</div>
<div style="position:absolute;left:1441.6px;top:345.6px;font-size:18.7px;line-height:26px;color:#000;white-space:nowrap;transform:translateX(-50%);letter-spacing:0.35px;">거래회수</div>
<div style="position:absolute;left:1540.5px;top:345.6px;font-size:18.7px;line-height:26px;color:#000;white-space:nowrap;transform:translateX(-50%);letter-spacing:0.35px;">구매포인트</div>
<div style="position:absolute;left:1650.5px;top:345.6px;font-size:18.7px;line-height:26px;color:#000;white-space:nowrap;transform:translateX(-50%);letter-spacing:0.35px;">설문포인트</div>
<div style="position:absolute;left:995.0px;top:375.6px;font-size:17.5px;line-height:24px;color:#000;white-space:nowrap;transform:translateX(-50%);">C94023</div>
<div style="position:absolute;left:1103.3px;top:374.6px;font-size:18.7px;line-height:26px;color:#000;white-space:nowrap;transform:translateX(-50%);letter-spacing:0.35px;">박거상</div>
<div style="position:absolute;left:1210.3px;top:374.6px;font-size:18.7px;line-height:26px;color:#000;white-space:nowrap;transform:translateX(-50%);letter-spacing:0.35px;">광주광역시</div>
<div style="position:absolute;left:1386.2px;top:375.6px;font-size:17.5px;line-height:24px;color:#000;white-space:nowrap;transform:translateX(-100%);">950,000</div>
<div style="position:absolute;left:1441.6px;top:375.6px;font-size:17.5px;line-height:24px;color:#000;white-space:nowrap;transform:translateX(-50%);">20</div>
<div style="position:absolute;left:1540.5px;top:375.6px;font-size:17.5px;line-height:24px;color:#000;white-space:nowrap;transform:translateX(-50%);">190</div>
<div style="position:absolute;left:1650.5px;top:375.6px;font-size:17.5px;line-height:24px;color:#000;white-space:nowrap;transform:translateX(-50%);">80</div>
<div style="position:absolute;left:995.0px;top:404.6px;font-size:17.5px;line-height:24px;color:#000;white-space:nowrap;transform:translateX(-50%);">B90120</div>
<div style="position:absolute;left:1103.3px;top:403.6px;font-size:18.7px;line-height:26px;color:#000;white-space:nowrap;transform:translateX(-50%);letter-spacing:0.35px;">한심해</div>
<div style="position:absolute;left:1210.3px;top:403.6px;font-size:18.7px;line-height:26px;color:#000;white-space:nowrap;transform:translateX(-50%);letter-spacing:0.35px;">대전광역시</div>
<div style="position:absolute;left:1386.2px;top:404.6px;font-size:17.5px;line-height:24px;color:#000;white-space:nowrap;transform:translateX(-100%);">950,000</div>
<div style="position:absolute;left:1441.6px;top:404.6px;font-size:17.5px;line-height:24px;color:#000;white-space:nowrap;transform:translateX(-50%);">45</div>
<div style="position:absolute;left:1540.5px;top:404.6px;font-size:17.5px;line-height:24px;color:#000;white-space:nowrap;transform:translateX(-50%);">190</div>
<div style="position:absolute;left:1650.5px;top:404.6px;font-size:17.5px;line-height:24px;color:#000;white-space:nowrap;transform:translateX(-50%);">70</div>
<div style="position:absolute;left:995.0px;top:433.6px;font-size:17.5px;line-height:24px;color:#000;white-space:nowrap;transform:translateX(-50%);">A89031</div>
<div style="position:absolute;left:1103.3px;top:432.6px;font-size:18.7px;line-height:26px;color:#000;white-space:nowrap;transform:translateX(-50%);letter-spacing:0.35px;">최고봉</div>
<div style="position:absolute;left:1210.3px;top:432.6px;font-size:18.7px;line-height:26px;color:#000;white-space:nowrap;transform:translateX(-50%);letter-spacing:0.35px;">서울특별시</div>
<div style="position:absolute;left:1386.2px;top:433.6px;font-size:17.5px;line-height:24px;color:#000;white-space:nowrap;transform:translateX(-100%);">1,300,000</div>
<div style="position:absolute;left:1441.6px;top:433.6px;font-size:17.5px;line-height:24px;color:#000;white-space:nowrap;transform:translateX(-50%);">60</div>
<div style="position:absolute;left:1540.5px;top:433.6px;font-size:17.5px;line-height:24px;color:#000;white-space:nowrap;transform:translateX(-50%);">260</div>
<div style="position:absolute;left:1650.5px;top:433.6px;font-size:17.5px;line-height:24px;color:#000;white-space:nowrap;transform:translateX(-50%);">50</div>
<div style="position:absolute;left:995.0px;top:462.6px;font-size:17.5px;line-height:24px;color:#000;white-space:nowrap;transform:translateX(-50%);">C97001</div>
<div style="position:absolute;left:1103.3px;top:461.6px;font-size:18.7px;line-height:26px;color:#000;white-space:nowrap;transform:translateX(-50%);letter-spacing:0.35px;">김민수</div>
<div style="position:absolute;left:1210.3px;top:461.6px;font-size:18.7px;line-height:26px;color:#000;white-space:nowrap;transform:translateX(-50%);letter-spacing:0.35px;">광주광역시</div>
<div style="position:absolute;left:1386.2px;top:462.6px;font-size:17.5px;line-height:24px;color:#000;white-space:nowrap;transform:translateX(-100%);">900,000</div>
<div style="position:absolute;left:1441.6px;top:462.6px;font-size:17.5px;line-height:24px;color:#000;white-space:nowrap;transform:translateX(-50%);">50</div>
<div style="position:absolute;left:1540.5px;top:462.6px;font-size:17.5px;line-height:24px;color:#000;white-space:nowrap;transform:translateX(-50%);">180</div>
<div style="position:absolute;left:1650.5px;top:462.6px;font-size:17.5px;line-height:24px;color:#000;white-space:nowrap;transform:translateX(-50%);">65</div>
<div style="position:absolute;left:995.0px;top:491.6px;font-size:17.5px;line-height:24px;color:#000;white-space:nowrap;transform:translateX(-50%);">B93021</div>
<div style="position:absolute;left:1103.3px;top:490.6px;font-size:18.7px;line-height:26px;color:#000;white-space:nowrap;transform:translateX(-50%);letter-spacing:0.35px;">고정해</div>
<div style="position:absolute;left:1210.3px;top:490.6px;font-size:18.7px;line-height:26px;color:#000;white-space:nowrap;transform:translateX(-50%);letter-spacing:0.35px;">대전광역시</div>
<div style="position:absolute;left:1386.2px;top:491.6px;font-size:17.5px;line-height:24px;color:#000;white-space:nowrap;transform:translateX(-100%);">775,000</div>
<div style="position:absolute;left:1441.6px;top:491.6px;font-size:17.5px;line-height:24px;color:#000;white-space:nowrap;transform:translateX(-50%);">43</div>
<div style="position:absolute;left:1540.5px;top:491.6px;font-size:17.5px;line-height:24px;color:#000;white-space:nowrap;transform:translateX(-50%);">155</div>
<div style="position:absolute;left:1650.5px;top:491.6px;font-size:17.5px;line-height:24px;color:#000;white-space:nowrap;transform:translateX(-50%);">85</div>
<div style="position:absolute;left:995.0px;top:520.6px;font-size:17.5px;line-height:24px;color:#000;white-space:nowrap;transform:translateX(-50%);">B99130</div>
<div style="position:absolute;left:1103.3px;top:519.6px;font-size:18.7px;line-height:26px;color:#000;white-space:nowrap;transform:translateX(-50%);letter-spacing:0.35px;">신선해</div>
<div style="position:absolute;left:1210.3px;top:519.6px;font-size:18.7px;line-height:26px;color:#000;white-space:nowrap;transform:translateX(-50%);letter-spacing:0.35px;">대전광역시</div>
<div style="position:absolute;left:1386.2px;top:520.6px;font-size:17.5px;line-height:24px;color:#000;white-space:nowrap;transform:translateX(-100%);">755,000</div>
<div style="position:absolute;left:1441.6px;top:520.6px;font-size:17.5px;line-height:24px;color:#000;white-space:nowrap;transform:translateX(-50%);">35</div>
<div style="position:absolute;left:1540.5px;top:520.6px;font-size:17.5px;line-height:24px;color:#000;white-space:nowrap;transform:translateX(-50%);">151</div>
<div style="position:absolute;left:1650.5px;top:520.6px;font-size:17.5px;line-height:24px;color:#000;white-space:nowrap;transform:translateX(-50%);">75</div>
<div style="position:absolute;left:995.0px;top:549.6px;font-size:17.5px;line-height:24px;color:#000;white-space:nowrap;transform:translateX(-50%);">C91001</div>
<div style="position:absolute;left:1103.3px;top:548.6px;font-size:18.7px;line-height:26px;color:#000;white-space:nowrap;transform:translateX(-50%);letter-spacing:0.35px;">송아지</div>
<div style="position:absolute;left:1210.3px;top:548.6px;font-size:18.7px;line-height:26px;color:#000;white-space:nowrap;transform:translateX(-50%);letter-spacing:0.35px;">광주광역시</div>
<div style="position:absolute;left:1386.2px;top:549.6px;font-size:17.5px;line-height:24px;color:#000;white-space:nowrap;transform:translateX(-100%);">805,000</div>
<div style="position:absolute;left:1441.6px;top:549.6px;font-size:17.5px;line-height:24px;color:#000;white-space:nowrap;transform:translateX(-50%);">25</div>
<div style="position:absolute;left:1540.5px;top:549.6px;font-size:17.5px;line-height:24px;color:#000;white-space:nowrap;transform:translateX(-50%);">161</div>
<div style="position:absolute;left:1650.5px;top:549.6px;font-size:17.5px;line-height:24px;color:#000;white-space:nowrap;transform:translateX(-50%);">25</div>
<div style="position:absolute;left:995.0px;top:578.6px;font-size:17.5px;line-height:24px;color:#000;white-space:nowrap;transform:translateX(-50%);">A88001</div>
<div style="position:absolute;left:1103.3px;top:577.6px;font-size:18.7px;line-height:26px;color:#000;white-space:nowrap;transform:translateX(-50%);letter-spacing:0.35px;">강효자</div>
<div style="position:absolute;left:1210.3px;top:577.6px;font-size:18.7px;line-height:26px;color:#000;white-space:nowrap;transform:translateX(-50%);letter-spacing:0.35px;">서울특별시</div>
<div style="position:absolute;left:1386.2px;top:578.6px;font-size:17.5px;line-height:24px;color:#000;white-space:nowrap;transform:translateX(-100%);">500,000</div>
<div style="position:absolute;left:1441.6px;top:578.6px;font-size:17.5px;line-height:24px;color:#000;white-space:nowrap;transform:translateX(-50%);">30</div>
<div style="position:absolute;left:1540.5px;top:578.6px;font-size:17.5px;line-height:24px;color:#000;white-space:nowrap;transform:translateX(-50%);">100</div>
<div style="position:absolute;left:1650.5px;top:578.6px;font-size:17.5px;line-height:24px;color:#000;white-space:nowrap;transform:translateX(-50%);">35</div>
<div style="position:absolute;left:995.0px;top:607.6px;font-size:17.5px;line-height:24px;color:#000;white-space:nowrap;transform:translateX(-50%);">A95010</div>
<div style="position:absolute;left:1103.3px;top:606.6px;font-size:18.7px;line-height:26px;color:#000;white-space:nowrap;transform:translateX(-50%);letter-spacing:0.35px;">이미지</div>
<div style="position:absolute;left:1210.3px;top:606.6px;font-size:18.7px;line-height:26px;color:#000;white-space:nowrap;transform:translateX(-50%);letter-spacing:0.35px;">서울특별시</div>
<div style="position:absolute;left:1386.2px;top:607.6px;font-size:17.5px;line-height:24px;color:#000;white-space:nowrap;transform:translateX(-100%);">1,250,000</div>
<div style="position:absolute;left:1441.6px;top:607.6px;font-size:17.5px;line-height:24px;color:#000;white-space:nowrap;transform:translateX(-50%);">40</div>
<div style="position:absolute;left:1540.5px;top:607.6px;font-size:17.5px;line-height:24px;color:#000;white-space:nowrap;transform:translateX(-50%);">250</div>
<div style="position:absolute;left:1650.5px;top:607.6px;font-size:17.5px;line-height:24px;color:#000;white-space:nowrap;transform:translateX(-50%);">85</div>
<div style="position:absolute;left:995.0px;top:636.6px;font-size:17.5px;line-height:24px;color:#000;white-space:nowrap;transform:translateX(-50%);">B91038</div>
<div style="position:absolute;left:1103.3px;top:635.6px;font-size:18.7px;line-height:26px;color:#000;white-space:nowrap;transform:translateX(-50%);letter-spacing:0.35px;">김예술</div>
<div style="position:absolute;left:1210.3px;top:635.6px;font-size:18.7px;line-height:26px;color:#000;white-space:nowrap;transform:translateX(-50%);letter-spacing:0.35px;">대전광역시</div>
<div style="position:absolute;left:1386.2px;top:636.6px;font-size:17.5px;line-height:24px;color:#000;white-space:nowrap;transform:translateX(-100%);">1,000,000</div>
<div style="position:absolute;left:1441.6px;top:636.6px;font-size:17.5px;line-height:24px;color:#000;white-space:nowrap;transform:translateX(-50%);">45</div>
<div style="position:absolute;left:1540.5px;top:636.6px;font-size:17.5px;line-height:24px;color:#000;white-space:nowrap;transform:translateX(-50%);">200</div>
<div style="position:absolute;left:1650.5px;top:636.6px;font-size:17.5px;line-height:24px;color:#000;white-space:nowrap;transform:translateX(-50%);">98</div>
<div style="position:absolute;left:995.0px;top:722.6px;font-size:18.7px;line-height:26px;color:#000;white-space:nowrap;transform:translateX(-50%);letter-spacing:0.35px;">조건</div>
<div style="position:absolute;left:995.0px;top:753.1px;font-size:16.2px;line-height:23px;color:#000;white-space:nowrap;transform:translateX(-50%);">FALSE</div>
<div style="position:absolute;left:936.0px;top:834.0px;font-size:18px;line-height:25px;color:#000;white-space:nowrap;">`</div>
<div style="position:absolute;left:932.0px;top:343.0px;width:774.2px;height:1.2px;background:#000;"></div>
<div style="position:absolute;left:932.0px;top:372.0px;width:774.2px;height:1.2px;background:#000;"></div>
<div style="position:absolute;left:932.0px;top:401.0px;width:774.2px;height:1.2px;background:#000;"></div>
<div style="position:absolute;left:932.0px;top:430.0px;width:774.2px;height:1.2px;background:#000;"></div>
<div style="position:absolute;left:932.0px;top:459.0px;width:774.2px;height:1.2px;background:#000;"></div>
<div style="position:absolute;left:932.0px;top:488.0px;width:774.2px;height:1.2px;background:#000;"></div>
<div style="position:absolute;left:932.0px;top:517.0px;width:774.2px;height:1.2px;background:#000;"></div>
<div style="position:absolute;left:932.0px;top:546.0px;width:774.2px;height:1.2px;background:#000;"></div>
<div style="position:absolute;left:932.0px;top:575.0px;width:774.2px;height:1.2px;background:#000;"></div>
<div style="position:absolute;left:932.0px;top:604.0px;width:774.2px;height:1.2px;background:#000;"></div>
<div style="position:absolute;left:932.0px;top:633.0px;width:774.2px;height:1.2px;background:#000;"></div>
<div style="position:absolute;left:932.0px;top:662.0px;width:774.2px;height:1.2px;background:#000;"></div>
<div style="position:absolute;left:932.0px;top:343.0px;width:1.2px;height:320.0px;background:#000;"></div>
<div style="position:absolute;left:1057.0px;top:343.0px;width:1.2px;height:320.0px;background:#000;"></div>
<div style="position:absolute;left:1149.0px;top:343.0px;width:1.2px;height:320.0px;background:#000;"></div>
<div style="position:absolute;left:1271.0px;top:343.0px;width:1.2px;height:320.0px;background:#000;"></div>
<div style="position:absolute;left:1397.0px;top:343.0px;width:1.2px;height:320.0px;background:#000;"></div>
<div style="position:absolute;left:1485.0px;top:343.0px;width:1.2px;height:320.0px;background:#000;"></div>
<div style="position:absolute;left:1595.0px;top:343.0px;width:1.2px;height:320.0px;background:#000;"></div>
<div style="position:absolute;left:1705.0px;top:343.0px;width:1.2px;height:320.0px;background:#000;"></div>
<div style="position:absolute;left:1269.8px;top:457.9px;width:129.1px;height:31.8px;background:transparent;border:2.4px solid #217346;"></div>
<div style="position:absolute;left:1394.5px;top:485.3px;width:7.0px;height:7.0px;background:#217346;border:1px solid #fff;"></div>
<div style="position:absolute;left:896.0px;top:913.6px;width:872.0px;height:25.0px;background:#e6e6e6;"></div>
<div style="position:absolute;left:896.0px;top:913.2px;width:872.0px;height:1.2px;background:#ababab;"></div>
<svg style="left:920px;top:921px" width="42" height="12" viewBox="0 0 42 12"><path d="M7 1V11L1.5 6Z" fill="#c9c9c9"/><path d="M31 1V11L36.5 6Z" fill="#c9c9c9"/></svg>
<div style="position:absolute;left:999.0px;top:917.0px;width:1.3px;height:22.0px;background:#8a8a8a;"></div>
<div style="position:absolute;left:1142.0px;top:917.0px;width:1.3px;height:22.0px;background:#8a8a8a;"></div>
<div style="position:absolute;left:1295.0px;top:917.0px;width:1.3px;height:22.0px;background:#8a8a8a;"></div>
<div style="position:absolute;left:1373.5px;top:917.0px;width:1.3px;height:22.0px;background:#8a8a8a;"></div>
<div style="position:absolute;left:1070.0px;top:913.5px;font-size:17.8px;line-height:25px;color:#444;white-space:nowrap;transform:translateX(-50%);">무작정따라하기</div>
<div style="position:absolute;left:1218.0px;top:913.5px;font-size:17.8px;line-height:25px;color:#444;white-space:nowrap;transform:translateX(-50%);">무작정따라하기2</div>
<div style="position:absolute;left:1334.0px;top:913.5px;font-size:17.8px;line-height:25px;color:#444;white-space:nowrap;transform:translateX(-50%);">기출01</div>
<div style="position:absolute;left:1412.0px;top:913.5px;font-size:17.8px;line-height:25px;color:#444;white-space:nowrap;transform:translateX(-50%);">기출02</div>
<div style="position:absolute;left:1451.5px;top:912.0px;width:77.0px;height:27.0px;background:#fff;border-left:1.2px solid #ababab;border-right:1.2px solid #ababab;"></div>
<div style="position:absolute;left:1490.0px;top:913.0px;font-size:17.8px;line-height:25px;color:#217346;white-space:nowrap;transform:translateX(-50%);">기출03</div>
<svg style="left:1561px;top:917px" width="22" height="22" viewBox="0 0 22 22"><circle cx="11" cy="11" r="9.3" fill="none" stroke="#777" stroke-width="1.3"/><path d="M5.8 11H16.2M11 5.8V16.2" stroke="#777" stroke-width="1.5"/></svg>
<div style="position:absolute;left:1650.0px;top:921.0px;width:3.0px;height:16.0px;background:transparent;background:repeating-linear-gradient(#a8a8a8 0 2px,transparent 2px 5px);"></div>
<div style="position:absolute;left:1668.5px;top:918.0px;width:110.0px;height:22.0px;background:#fff;border:1px solid #ababab;"></div>
<div style="position:absolute;left:1668.5px;top:918.0px;width:18.0px;height:22.0px;background:#fff;border:1px solid #ababab;"></div>
<svg style="left:1673px;top:922px" width="8" height="11" viewBox="0 0 8 11"><path d="M6.5 0.5V10.5L1 5.5Z" fill="#555"/></svg>
</div></div>
<div style="position:absolute;left:626px;top:422px;width:416px;height:159px;background:#f0f0f0;border:1px solid #707070;box-shadow:0 6px 22px rgba(0,0,0,.42),0 0 6px rgba(0,0,0,.22);overflow:hidden;">
<div style="position:absolute;left:0.0px;top:0.0px;width:414.0px;height:36.5px;background:#fff;"></div>
<div style="position:absolute;left:9.5px;top:7.0px;font-size:15.6px;line-height:22px;color:#000;white-space:nowrap;letter-spacing:-0.15px;">Microsoft Excel</div>
<svg style="left:387px;top:11px" width="14" height="14" viewBox="0 0 14 14"><path d="M1 1L13 13M13 1L1 13" stroke="#111" stroke-width="1.2"/></svg>
<svg style="left:16px;top:57px" width="42" height="42" viewBox="0 0 42 42"><path d="M21 1.5L41 40H1Z" fill="#ffd800" stroke="#f0a81c" stroke-width="1.2" stroke-linejoin="round"/><path d="M21 15V31" stroke="#000" stroke-width="2.2"/><rect x="19.8" y="33.5" width="2.4" height="2.6" fill="#000"/></svg>
<div style="position:absolute;left:73.0px;top:66.5px;font-size:15.6px;line-height:22px;color:#000;white-space:nowrap;letter-spacing:0.55px;">추출 범위의 필드 이름이 잘못되었거나 없습니다.</div>
<div style="position:absolute;left:145.0px;top:111.0px;width:127.0px;height:33.0px;background:#e1e1e1;border:2px solid #0078d7;"></div>
<div style="position:absolute;left:208.5px;top:116.5px;font-size:15.6px;line-height:22px;color:#000;white-space:nowrap;transform:translateX(-50%);letter-spacing:0.5px;">확인</div>
</div>
</body></html>
